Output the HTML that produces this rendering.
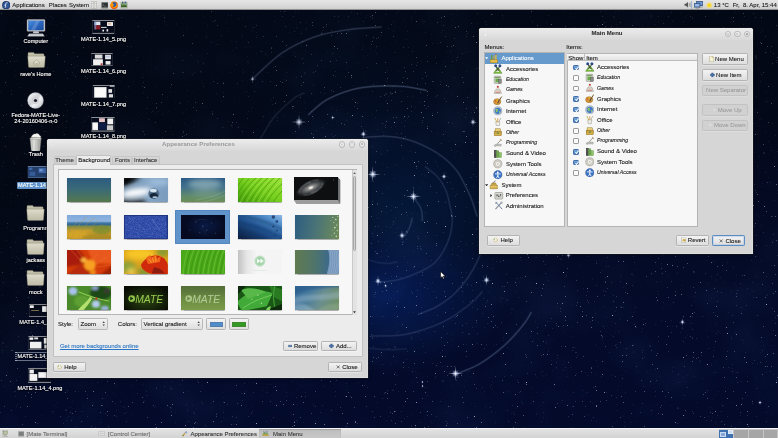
<!DOCTYPE html>
<html>
<head>
<meta charset="utf-8">
<title>MATE Desktop</title>
<style>
*{box-sizing:border-box;margin:0;padding:0}
html,body{width:778px;height:438px;overflow:hidden;background:#060b1c}
body{font-family:"Liberation Sans",sans-serif;font-size:6px;color:#1a1a1a;position:relative;line-height:1;-webkit-text-stroke:.1px}
#wall{position:absolute;left:0;top:0;width:778px;height:438px;
 background:
  radial-gradient(ellipse 120px 75px at 388px 296px, rgba(6,28,86,.95) 0%, rgba(5,22,70,.6) 55%, rgba(4,16,56,0) 100%),
  radial-gradient(ellipse 180px 150px at 405px 210px, rgba(4,24,56,.95) 0%, rgba(4,18,46,.6) 50%, rgba(3,12,34,0) 100%),
  radial-gradient(ellipse 260px 110px at 340px 60px, rgba(3,14,34,.7) 0%, rgba(3,10,26,0) 100%),
  radial-gradient(ellipse 260px 230px at 0px 170px, rgba(3,8,20,.95) 0%, rgba(3,8,20,.6) 50%, rgba(3,8,20,0) 100%),
  linear-gradient(180deg,#030816 0%,#030818 25%,#040a24 50%,#040b2a 70%,#030a2a 100%);}
#wallsvg{position:absolute;left:0;top:0}
#root{position:absolute;left:0;top:0;width:778px;height:438px;overflow:hidden;will-change:transform}
#top{position:absolute;left:0;top:0;width:778px;height:10px;background:linear-gradient(#e6e6e6,#d6d6d6 75%,#cdcdcd);border-bottom:.6px solid #8f8f8f}
#bot{position:absolute;left:0;top:427.600px;width:778px;height:10.400px;background:linear-gradient(#e2e2e2,#d3d3d3);border-top:.6px solid #f6f6f6}
.t{position:absolute;white-space:nowrap;line-height:1}
.win{position:absolute;background:#d6d6d6;border-radius:2.5px 2.5px 0 0;box-shadow:inset 0 0 0 .5px rgba(255,255,255,.35),0 0 0 .6px rgba(40,40,40,.6),0 1px 3.5px rgba(0,0,0,.45)}
.tb{position:absolute;left:0;top:0;right:0;height:11.5px;border-radius:2.5px 2.5px 0 0;background:linear-gradient(#ececec,#d8d8d8)}
.tt{position:absolute;top:2.6px;left:0;right:0;text-align:center;font-weight:bold;font-size:6px;letter-spacing:.15px}
.wb{position:absolute;top:2.2px;width:6.4px;height:6.4px;border-radius:50%;border:.6px solid #bababa;background:linear-gradient(#f2f2f2,#e2e2e2)}
.btn{position:absolute;border:.6px solid #b4b4b4;border-radius:1.3px;background:linear-gradient(#f3f3f3,#dedede);box-shadow:0 .5px 0 rgba(255,255,255,.7)}
.btn .t{top:50%;transform:translateY(-52%)}
.btn.dis{background:#d1d1d1;border-color:#c2c2c2;color:#9e9e9e;box-shadow:0 .5px 0 rgba(255,255,255,.35)}
.white{position:absolute;background:#f7f7f7;border:.6px solid #b4b4b4}
.row{position:absolute;left:0;right:0;height:10.55px}
.row .t{top:2.4px}
.i{font-style:italic;font-size:5.2px}
.row .i{top:2.9px}
.ic{position:absolute;width:8px;height:8px}
.cb{position:absolute;width:5.8px;height:5.8px;border:.6px solid #9a9a9a;border-radius:1.1px;background:#fcfcfc}
.cb.on{background:linear-gradient(#7aa7d8,#4a7fbd);border-color:#3d6ea8}
.cb.on:after{content:"";position:absolute;left:1.5px;top:.2px;width:1.4px;height:3px;border:solid #fff;border-width:0 .8px .8px 0;transform:rotate(40deg)}
.dl{position:absolute;color:#fff;font-size:5.6px;-webkit-text-stroke:.12px #fff;text-align:center;white-space:nowrap;text-shadow:0 .5px 1px #000,0 0 1px #000;transform:translateX(-50%)}
.th{position:absolute;width:44px;height:24.5px;box-shadow:0 .5px 1px rgba(0,0,0,.3)}
.tab{position:absolute;border:.6px solid #c6c6c6;border-bottom:none;border-radius:1.5px 1.5px 0 0;background:linear-gradient(#d6d6d6,#cdcdcd)}
.tab.on{background:#ececec}
.combo{position:absolute;border:.6px solid #b9b9b9;border-radius:1.3px;background:linear-gradient(#f3f3f3,#dedede)}
</style>
</head>
<body>
<div id="root">
<div id="wall"></div>
<svg id="wallsvg" width="778" height="438" viewBox="0 0 778 438">
<defs><radialGradient id="sg"><stop offset="0" stop-color="#fff" stop-opacity="1"/><stop offset=".25" stop-color="#dfe8ff" stop-opacity=".75"/><stop offset="1" stop-color="#9db8ee" stop-opacity="0"/></radialGradient><filter id="bl" x="-20%" y="-20%" width="140%" height="140%"><feGaussianBlur stdDeviation=".7"/></filter></defs>
<filter id="neb" x="0" y="0" width="100%" height="100%"><feTurbulence type="fractalNoise" baseFrequency=".014 .018" numOctaves="3" seed="11"/><feColorMatrix values="0 0 0 0 .08  0 0 0 0 .20  0 0 0 0 .52  0 0 0 1.5 -.68"/></filter>
<filter id="stf" x="0" y="0" width="100%" height="100%"><feTurbulence type="fractalNoise" baseFrequency=".9" numOctaves="2" seed="5"/><feColorMatrix values="0 0 0 0 .8  0 0 0 0 .86  0 0 0 0 1  0 0 0 10 -7.8"/><feGaussianBlur stdDeviation=".3"/></filter>
<filter id="stf2" x="0" y="0" width="100%" height="100%"><feTurbulence type="fractalNoise" baseFrequency=".8" numOctaves="2" seed="23"/><feColorMatrix values="0 0 0 0 .7  0 0 0 0 .78  0 0 0 0 1  0 0 0 8 -6.1"/><feGaussianBlur stdDeviation=".45"/></filter>
<rect x="0" y="10" width="778" height="418" filter="url(#neb)" opacity=".1"/>
<rect y="10" width="778" height="418" filter="url(#stf)" opacity=".68"/>
<rect y="10" width="778" height="418" filter="url(#stf2)" opacity=".45"/>
<g fill="#b9c8ea"><circle cx="252" cy="73" r="0.5" fill-opacity="0.1"/><circle cx="639" cy="49" r="0.5" fill-opacity="0.1"/><circle cx="395" cy="26" r="0.4" fill-opacity="0.3"/><circle cx="187" cy="240" r="0.3" fill-opacity="0.5"/><circle cx="96" cy="103" r="0.5" fill-opacity="0.4"/><circle cx="48" cy="255" r="0.3" fill-opacity="0.6"/><circle cx="36" cy="369" r="0.3" fill-opacity="0.3"/><circle cx="421" cy="249" r="0.5" fill-opacity="0.5"/><circle cx="141" cy="253" r="0.5" fill-opacity="0.2"/><circle cx="76" cy="308" r="0.5" fill-opacity="0.1"/><circle cx="160" cy="294" r="0.4" fill-opacity="0.5"/><circle cx="362" cy="396" r="0.3" fill-opacity="0.3"/><circle cx="618" cy="302" r="0.3" fill-opacity="0.2"/><circle cx="234" cy="217" r="0.3" fill-opacity="0.5"/><circle cx="224" cy="420" r="0.3" fill-opacity="0.4"/><circle cx="128" cy="153" r="0.4" fill-opacity="0.3"/><circle cx="748" cy="42" r="0.5" fill-opacity="0.4"/><circle cx="681" cy="141" r="0.5" fill-opacity="0.3"/><circle cx="386" cy="343" r="0.3" fill-opacity="0.5"/><circle cx="735" cy="208" r="0.5" fill-opacity="0.2"/><circle cx="569" cy="139" r="0.5" fill-opacity="0.6"/><circle cx="639" cy="129" r="0.4" fill-opacity="0.5"/><circle cx="270" cy="403" r="0.3" fill-opacity="0.2"/><circle cx="91" cy="35" r="0.6" fill-opacity="0.3"/><circle cx="574" cy="176" r="0.6" fill-opacity="0.4"/><circle cx="129" cy="178" r="0.3" fill-opacity="0.5"/><circle cx="637" cy="371" r="0.3" fill-opacity="0.5"/><circle cx="767" cy="295" r="0.4" fill-opacity="0.6"/><circle cx="117" cy="84" r="0.3" fill-opacity="0.4"/><circle cx="9" cy="357" r="0.3" fill-opacity="0.2"/><circle cx="3" cy="185" r="0.3" fill-opacity="0.4"/><circle cx="248" cy="62" r="0.6" fill-opacity="0.4"/><circle cx="480" cy="293" r="0.3" fill-opacity="0.3"/><circle cx="678" cy="408" r="0.5" fill-opacity="0.5"/><circle cx="305" cy="177" r="0.3" fill-opacity="0.4"/><circle cx="312" cy="90" r="0.3" fill-opacity="0.3"/><circle cx="86" cy="261" r="0.3" fill-opacity="0.1"/><circle cx="118" cy="52" r="0.3" fill-opacity="0.4"/><circle cx="55" cy="97" r="0.4" fill-opacity="0.2"/><circle cx="196" cy="155" r="0.3" fill-opacity="0.3"/><circle cx="90" cy="214" r="0.4" fill-opacity="0.4"/><circle cx="243" cy="70" r="0.5" fill-opacity="0.3"/><circle cx="206" cy="356" r="0.3" fill-opacity="0.4"/><circle cx="160" cy="408" r="0.3" fill-opacity="0.2"/><circle cx="423" cy="21" r="0.5" fill-opacity="0.3"/><circle cx="500" cy="48" r="0.6" fill-opacity="0.2"/><circle cx="285" cy="80" r="0.6" fill-opacity="0.2"/><circle cx="421" cy="220" r="0.5" fill-opacity="0.2"/><circle cx="631" cy="422" r="0.6" fill-opacity="0.2"/><circle cx="186" cy="177" r="0.6" fill-opacity="0.2"/><circle cx="403" cy="159" r="0.3" fill-opacity="0.6"/><circle cx="615" cy="207" r="0.3" fill-opacity="0.5"/><circle cx="744" cy="197" r="0.5" fill-opacity="0.6"/><circle cx="743" cy="162" r="0.3" fill-opacity="0.2"/><circle cx="366" cy="151" r="0.4" fill-opacity="0.4"/><circle cx="700" cy="361" r="0.4" fill-opacity="0.6"/><circle cx="268" cy="279" r="0.6" fill-opacity="0.4"/><circle cx="708" cy="337" r="0.6" fill-opacity="0.2"/><circle cx="692" cy="191" r="0.5" fill-opacity="0.3"/><circle cx="623" cy="416" r="0.4" fill-opacity="0.3"/><circle cx="578" cy="45" r="0.3" fill-opacity="0.2"/><circle cx="99" cy="73" r="0.4" fill-opacity="0.5"/><circle cx="114" cy="355" r="0.4" fill-opacity="0.4"/><circle cx="273" cy="239" r="0.3" fill-opacity="0.1"/><circle cx="622" cy="314" r="0.3" fill-opacity="0.4"/><circle cx="726" cy="191" r="0.6" fill-opacity="0.2"/><circle cx="680" cy="22" r="0.3" fill-opacity="0.3"/><circle cx="187" cy="255" r="0.3" fill-opacity="0.4"/><circle cx="649" cy="35" r="0.5" fill-opacity="0.3"/><circle cx="356" cy="254" r="0.5" fill-opacity="0.3"/><circle cx="714" cy="220" r="0.5" fill-opacity="0.2"/><circle cx="397" cy="375" r="0.6" fill-opacity="0.2"/><circle cx="3" cy="344" r="0.3" fill-opacity="0.2"/><circle cx="482" cy="60" r="0.3" fill-opacity="0.3"/><circle cx="403" cy="242" r="0.6" fill-opacity="0.5"/><circle cx="687" cy="34" r="0.3" fill-opacity="0.3"/><circle cx="601" cy="222" r="0.5" fill-opacity="0.1"/><circle cx="696" cy="36" r="0.3" fill-opacity="0.4"/><circle cx="393" cy="224" r="0.5" fill-opacity="0.3"/><circle cx="395" cy="347" r="0.5" fill-opacity="0.6"/><circle cx="544" cy="376" r="0.3" fill-opacity="0.6"/><circle cx="695" cy="95" r="0.4" fill-opacity="0.2"/><circle cx="95" cy="195" r="0.3" fill-opacity="0.4"/><circle cx="333" cy="99" r="0.3" fill-opacity="0.5"/><circle cx="698" cy="75" r="0.5" fill-opacity="0.4"/><circle cx="285" cy="116" r="0.3" fill-opacity="0.6"/><circle cx="171" cy="408" r="0.4" fill-opacity="0.5"/><circle cx="127" cy="289" r="0.3" fill-opacity="0.2"/><circle cx="336" cy="226" r="0.3" fill-opacity="0.3"/><circle cx="277" cy="49" r="0.3" fill-opacity="0.1"/><circle cx="431" cy="194" r="0.3" fill-opacity="0.3"/><circle cx="403" cy="133" r="0.3" fill-opacity="0.2"/><circle cx="715" cy="106" r="0.3" fill-opacity="0.2"/><circle cx="212" cy="389" r="0.3" fill-opacity="0.2"/><circle cx="101" cy="187" r="0.5" fill-opacity="0.5"/><circle cx="201" cy="72" r="0.5" fill-opacity="0.4"/><circle cx="545" cy="47" r="0.3" fill-opacity="0.5"/><circle cx="143" cy="384" r="0.3" fill-opacity="0.6"/><circle cx="494" cy="345" r="0.3" fill-opacity="0.4"/><circle cx="173" cy="121" r="0.3" fill-opacity="0.3"/><circle cx="264" cy="241" r="0.3" fill-opacity="0.4"/><circle cx="34" cy="307" r="0.3" fill-opacity="0.6"/><circle cx="204" cy="86" r="0.3" fill-opacity="0.4"/><circle cx="413" cy="96" r="0.4" fill-opacity="0.4"/><circle cx="138" cy="155" r="0.3" fill-opacity="0.6"/><circle cx="29" cy="18" r="0.5" fill-opacity="0.4"/><circle cx="147" cy="208" r="0.4" fill-opacity="0.2"/><circle cx="637" cy="191" r="0.4" fill-opacity="0.4"/><circle cx="691" cy="416" r="0.3" fill-opacity="0.5"/><circle cx="764" cy="153" r="0.6" fill-opacity="0.5"/><circle cx="567" cy="68" r="0.3" fill-opacity="0.6"/><circle cx="651" cy="16" r="0.5" fill-opacity="0.5"/><circle cx="199" cy="78" r="0.3" fill-opacity="0.4"/><circle cx="296" cy="221" r="0.3" fill-opacity="0.4"/><circle cx="539" cy="29" r="0.3" fill-opacity="0.2"/><circle cx="347" cy="120" r="0.3" fill-opacity="0.6"/><circle cx="426" cy="112" r="0.3" fill-opacity="0.2"/><circle cx="142" cy="150" r="0.3" fill-opacity="0.3"/><circle cx="391" cy="94" r="0.5" fill-opacity="0.5"/><circle cx="71" cy="352" r="0.3" fill-opacity="0.3"/><circle cx="32" cy="19" r="0.3" fill-opacity="0.4"/><circle cx="66" cy="410" r="0.6" fill-opacity="0.5"/><circle cx="512" cy="309" r="0.5" fill-opacity="0.3"/><circle cx="254" cy="422" r="0.3" fill-opacity="0.3"/><circle cx="481" cy="71" r="0.6" fill-opacity="0.5"/><circle cx="694" cy="272" r="0.5" fill-opacity="0.5"/><circle cx="393" cy="390" r="0.6" fill-opacity="0.4"/><circle cx="650" cy="346" r="0.6" fill-opacity="0.4"/><circle cx="621" cy="307" r="0.5" fill-opacity="0.4"/><circle cx="66" cy="27" r="0.5" fill-opacity="0.3"/><circle cx="82" cy="359" r="0.5" fill-opacity="0.1"/><circle cx="15" cy="232" r="0.3" fill-opacity="0.4"/><circle cx="3" cy="343" r="0.5" fill-opacity="0.6"/><circle cx="699" cy="48" r="0.5" fill-opacity="0.2"/><circle cx="573" cy="115" r="0.3" fill-opacity="0.5"/><circle cx="183" cy="326" r="0.3" fill-opacity="0.5"/><circle cx="759" cy="216" r="0.4" fill-opacity="0.2"/><circle cx="708" cy="130" r="0.3" fill-opacity="0.4"/><circle cx="500" cy="42" r="0.3" fill-opacity="0.3"/><circle cx="507" cy="300" r="0.5" fill-opacity="0.4"/><circle cx="10" cy="35" r="0.3" fill-opacity="0.6"/><circle cx="77" cy="101" r="0.4" fill-opacity="0.3"/><circle cx="402" cy="204" r="0.4" fill-opacity="0.5"/><circle cx="773" cy="240" r="0.3" fill-opacity="0.6"/><circle cx="728" cy="17" r="0.4" fill-opacity="0.2"/><circle cx="394" cy="426" r="0.3" fill-opacity="0.3"/><circle cx="713" cy="399" r="0.3" fill-opacity="0.4"/><circle cx="110" cy="229" r="0.3" fill-opacity="0.2"/><circle cx="638" cy="223" r="0.3" fill-opacity="0.5"/><circle cx="180" cy="385" r="0.4" fill-opacity="0.3"/><circle cx="124" cy="407" r="0.5" fill-opacity="0.3"/><circle cx="235" cy="69" r="0.3" fill-opacity="0.3"/><circle cx="94" cy="148" r="0.3" fill-opacity="0.5"/><circle cx="653" cy="60" r="0.3" fill-opacity="0.5"/><circle cx="701" cy="131" r="0.3" fill-opacity="0.2"/><circle cx="304" cy="374" r="0.3" fill-opacity="0.3"/><circle cx="333" cy="125" r="0.3" fill-opacity="0.3"/><circle cx="40" cy="287" r="0.5" fill-opacity="0.6"/><circle cx="194" cy="121" r="0.5" fill-opacity="0.3"/><circle cx="602" cy="338" r="0.4" fill-opacity="0.5"/><circle cx="632" cy="274" r="0.5" fill-opacity="0.4"/><circle cx="560" cy="31" r="0.5" fill-opacity="0.3"/><circle cx="478" cy="68" r="0.6" fill-opacity="0.3"/><circle cx="38" cy="397" r="0.3" fill-opacity="0.2"/><circle cx="323" cy="128" r="0.3" fill-opacity="0.5"/><circle cx="760" cy="119" r="0.5" fill-opacity="0.2"/><circle cx="376" cy="290" r="0.3" fill-opacity="0.2"/><circle cx="126" cy="97" r="0.6" fill-opacity="0.4"/><circle cx="171" cy="389" r="0.6" fill-opacity="0.3"/><circle cx="109" cy="90" r="0.3" fill-opacity="0.2"/><circle cx="432" cy="143" r="0.3" fill-opacity="0.2"/><circle cx="443" cy="381" r="0.5" fill-opacity="0.5"/><circle cx="298" cy="322" r="0.3" fill-opacity="0.3"/><circle cx="263" cy="36" r="0.3" fill-opacity="0.4"/><circle cx="280" cy="297" r="0.5" fill-opacity="0.4"/><circle cx="671" cy="100" r="0.3" fill-opacity="0.6"/><circle cx="299" cy="280" r="0.4" fill-opacity="0.6"/><circle cx="660" cy="375" r="0.3" fill-opacity="0.2"/><circle cx="331" cy="329" r="0.6" fill-opacity="0.3"/><circle cx="457" cy="10" r="0.4" fill-opacity="0.6"/><circle cx="722" cy="231" r="0.4" fill-opacity="0.6"/><circle cx="193" cy="56" r="0.3" fill-opacity="0.2"/><circle cx="756" cy="56" r="0.6" fill-opacity="0.5"/><circle cx="504" cy="330" r="0.4" fill-opacity="0.2"/><circle cx="604" cy="11" r="0.3" fill-opacity="0.2"/><circle cx="716" cy="280" r="0.3" fill-opacity="0.6"/><circle cx="487" cy="231" r="0.4" fill-opacity="0.5"/><circle cx="87" cy="39" r="0.5" fill-opacity="0.6"/><circle cx="149" cy="119" r="0.6" fill-opacity="0.4"/><circle cx="8" cy="136" r="0.4" fill-opacity="0.3"/><circle cx="246" cy="361" r="0.3" fill-opacity="0.3"/><circle cx="183" cy="113" r="0.4" fill-opacity="0.5"/><circle cx="239" cy="19" r="0.4" fill-opacity="0.5"/><circle cx="503" cy="44" r="0.3" fill-opacity="0.4"/><circle cx="720" cy="105" r="0.3" fill-opacity="0.5"/><circle cx="559" cy="161" r="0.4" fill-opacity="0.2"/><circle cx="620" cy="319" r="0.5" fill-opacity="0.2"/><circle cx="386" cy="94" r="0.6" fill-opacity="0.5"/><circle cx="180" cy="103" r="0.6" fill-opacity="0.5"/><circle cx="85" cy="271" r="0.5" fill-opacity="0.2"/><circle cx="174" cy="184" r="0.5" fill-opacity="0.1"/><circle cx="463" cy="395" r="0.3" fill-opacity="0.2"/><circle cx="758" cy="69" r="0.3" fill-opacity="0.5"/><circle cx="143" cy="198" r="0.5" fill-opacity="0.5"/><circle cx="570" cy="427" r="0.3" fill-opacity="0.3"/><circle cx="144" cy="401" r="0.5" fill-opacity="0.3"/><circle cx="243" cy="313" r="0.6" fill-opacity="0.3"/><circle cx="258" cy="81" r="0.3" fill-opacity="0.2"/><circle cx="63" cy="186" r="0.3" fill-opacity="0.4"/><circle cx="590" cy="169" r="0.6" fill-opacity="0.5"/><circle cx="640" cy="191" r="0.3" fill-opacity="0.5"/><circle cx="152" cy="236" r="0.4" fill-opacity="0.2"/><circle cx="283" cy="385" r="0.3" fill-opacity="0.4"/><circle cx="193" cy="271" r="0.4" fill-opacity="0.1"/><circle cx="27" cy="36" r="0.3" fill-opacity="0.2"/><circle cx="581" cy="386" r="0.3" fill-opacity="0.3"/><circle cx="261" cy="409" r="0.3" fill-opacity="0.2"/><circle cx="558" cy="142" r="0.3" fill-opacity="0.3"/><circle cx="561" cy="259" r="0.6" fill-opacity="0.4"/><circle cx="734" cy="20" r="0.3" fill-opacity="0.2"/><circle cx="557" cy="205" r="0.6" fill-opacity="0.3"/><circle cx="195" cy="190" r="0.4" fill-opacity="0.2"/><circle cx="386" cy="14" r="0.5" fill-opacity="0.3"/><circle cx="538" cy="73" r="0.3" fill-opacity="0.3"/><circle cx="249" cy="161" r="0.6" fill-opacity="0.4"/><circle cx="398" cy="174" r="0.3" fill-opacity="0.2"/><circle cx="50" cy="24" r="0.5" fill-opacity="0.4"/><circle cx="125" cy="188" r="0.3" fill-opacity="0.6"/><circle cx="206" cy="45" r="0.3" fill-opacity="0.3"/><circle cx="769" cy="416" r="0.3" fill-opacity="0.2"/><circle cx="324" cy="269" r="0.5" fill-opacity="0.2"/><circle cx="419" cy="333" r="0.6" fill-opacity="0.2"/><circle cx="654" cy="133" r="0.5" fill-opacity="0.2"/><circle cx="198" cy="119" r="0.4" fill-opacity="0.2"/><circle cx="191" cy="74" r="0.5" fill-opacity="0.2"/><circle cx="50" cy="115" r="0.3" fill-opacity="0.4"/><circle cx="180" cy="348" r="0.5" fill-opacity="0.3"/><circle cx="29" cy="12" r="0.6" fill-opacity="0.2"/><circle cx="349" cy="166" r="0.3" fill-opacity="0.2"/><circle cx="39" cy="261" r="0.6" fill-opacity="0.4"/><circle cx="724" cy="166" r="0.6" fill-opacity="0.2"/><circle cx="469" cy="334" r="0.5" fill-opacity="0.6"/><circle cx="82" cy="259" r="0.5" fill-opacity="0.3"/><circle cx="29" cy="152" r="0.3" fill-opacity="0.2"/><circle cx="198" cy="261" r="0.5" fill-opacity="0.6"/><circle cx="634" cy="352" r="0.4" fill-opacity="0.4"/><circle cx="144" cy="140" r="0.3" fill-opacity="0.1"/><circle cx="386" cy="212" r="0.4" fill-opacity="0.2"/><circle cx="308" cy="240" r="0.5" fill-opacity="0.4"/><circle cx="508" cy="176" r="0.3" fill-opacity="0.3"/><circle cx="220" cy="139" r="0.3" fill-opacity="0.3"/><circle cx="441" cy="159" r="0.4" fill-opacity="0.1"/><circle cx="596" cy="345" r="0.5" fill-opacity="0.2"/><circle cx="566" cy="95" r="0.3" fill-opacity="0.3"/><circle cx="122" cy="57" r="0.3" fill-opacity="0.3"/><circle cx="687" cy="203" r="0.3" fill-opacity="0.2"/><circle cx="40" cy="70" r="0.6" fill-opacity="0.6"/><circle cx="69" cy="270" r="0.3" fill-opacity="0.5"/><circle cx="134" cy="155" r="0.3" fill-opacity="0.4"/><circle cx="720" cy="55" r="0.4" fill-opacity="0.5"/></g>
<path d="M252.5,79.0C257.3,74.7 271.2,60.4 281.4,53.4C291.6,46.4 302.8,41.2 313.5,37.3C324.2,33.4 334.4,31.7 345.7,30.0C356.9,28.3 375.1,27.5 381.0,27.0" fill="none" stroke="#8fa9d8" stroke-opacity="0.17" stroke-width="2.200" stroke-linecap="round" filter="url(#bl)"/>
<path d="M252.5,79.0C257.3,74.7 271.2,60.4 281.4,53.4C291.6,46.4 302.8,41.2 313.5,37.3C324.2,33.4 334.4,31.7 345.7,30.0C356.9,28.3 375.1,27.5 381.0,27.0" fill="none" stroke="#b4c6e8" stroke-opacity="0.23" stroke-width="0.8" stroke-linecap="round"/>
<path d="M308.7,114.4C311.6,112.0 319.2,104.1 326.4,100.0C333.6,95.9 343.4,92.0 352.0,89.7C360.6,87.4 369.2,86.7 377.8,86.2C386.4,85.7 395.5,85.8 403.5,86.5C411.5,87.2 422.2,89.7 426.0,90.3" fill="none" stroke="#8fa9d8" stroke-opacity="0.17" stroke-width="2.200" stroke-linecap="round" filter="url(#bl)"/>
<path d="M308.7,114.4C311.6,112.0 319.2,104.1 326.4,100.0C333.6,95.9 343.4,92.0 352.0,89.7C360.6,87.4 369.2,86.7 377.8,86.2C386.4,85.7 395.5,85.8 403.5,86.5C411.5,87.2 422.2,89.7 426.0,90.3" fill="none" stroke="#b4c6e8" stroke-opacity="0.23" stroke-width="0.8" stroke-linecap="round"/>
<path d="M260.5,138.5C262.9,134.8 269.4,122.7 275.0,116.0C280.6,109.3 289.2,102.2 294.0,98.4C298.8,94.6 302.3,93.9 304.0,93.0" fill="none" stroke="#8fa9d8" stroke-opacity="0.07" stroke-width="2.200" stroke-linecap="round" filter="url(#bl)"/>
<path d="M260.5,138.5C262.9,134.8 269.4,122.7 275.0,116.0C280.6,109.3 289.2,102.2 294.0,98.4C298.8,94.6 302.3,93.9 304.0,93.0" fill="none" stroke="#b4c6e8" stroke-opacity="0.10" stroke-width="0.8" stroke-linecap="round"/>
<path d="M363.0,137.5C366.9,137.3 379.2,136.0 386.5,136.3C393.8,136.6 400.1,137.5 407.0,139.4C413.9,141.3 421.4,144.5 427.6,147.6C433.8,150.7 439.2,154.1 444.0,157.9C448.8,161.7 453.3,166.4 456.4,170.2C459.5,174.0 460.2,175.9 462.6,180.5C465.0,185.1 468.6,192.1 471.0,198.0C473.4,203.9 476.0,213.0 477.0,216.0" fill="none" stroke="#8fa9d8" stroke-opacity="0.10" stroke-width="2.200" stroke-linecap="round" filter="url(#bl)"/>
<path d="M363.0,137.5C366.9,137.3 379.2,136.0 386.5,136.3C393.8,136.6 400.1,137.5 407.0,139.4C413.9,141.3 421.4,144.5 427.6,147.6C433.8,150.7 439.2,154.1 444.0,157.9C448.8,161.7 453.3,166.4 456.4,170.2C459.5,174.0 460.2,175.9 462.6,180.5C465.0,185.1 468.6,192.1 471.0,198.0C473.4,203.9 476.0,213.0 477.0,216.0" fill="none" stroke="#b4c6e8" stroke-opacity="0.14" stroke-width="0.8" stroke-linecap="round"/>
<path d="M480.0,255.5C478.8,257.9 475.4,265.4 472.8,269.9C470.2,274.3 468.1,277.8 464.6,282.2C461.1,286.6 456.8,291.9 452.0,296.0C447.2,300.1 441.6,303.9 436.0,307.0C430.4,310.1 421.3,313.1 418.4,314.3" fill="none" stroke="#8fa9d8" stroke-opacity="0.09" stroke-width="2.200" stroke-linecap="round" filter="url(#bl)"/>
<path d="M480.0,255.5C478.8,257.9 475.4,265.4 472.8,269.9C470.2,274.3 468.1,277.8 464.6,282.2C461.1,286.6 456.8,291.9 452.0,296.0C447.2,300.1 441.6,303.9 436.0,307.0C430.4,310.1 421.3,313.1 418.4,314.3" fill="none" stroke="#b4c6e8" stroke-opacity="0.12" stroke-width="0.8" stroke-linecap="round"/>
<path d="M425.6,167.0C427.7,168.7 434.6,173.5 438.0,177.4C441.4,181.3 444.0,185.8 446.0,190.7C448.0,195.6 449.1,202.0 450.2,207.0C451.2,212.0 452.6,214.8 452.3,220.5C452.0,226.2 450.9,234.2 448.2,241.0C445.5,247.8 440.7,256.4 435.9,261.6C431.1,266.8 425.2,269.1 419.4,272.0C413.6,274.9 406.5,277.4 401.0,279.0C395.5,280.6 390.3,281.0 386.5,281.5C382.7,282.0 379.7,282.1 378.3,282.2" fill="none" stroke="#8fa9d8" stroke-opacity="0.08" stroke-width="2.200" stroke-linecap="round" filter="url(#bl)"/>
<path d="M425.6,167.0C427.7,168.7 434.6,173.5 438.0,177.4C441.4,181.3 444.0,185.8 446.0,190.7C448.0,195.6 449.1,202.0 450.2,207.0C451.2,212.0 452.6,214.8 452.3,220.5C452.0,226.2 450.9,234.2 448.2,241.0C445.5,247.8 440.7,256.4 435.9,261.6C431.1,266.8 425.2,269.1 419.4,272.0C413.6,274.9 406.5,277.4 401.0,279.0C395.5,280.6 390.3,281.0 386.5,281.5C382.7,282.0 379.7,282.1 378.3,282.2" fill="none" stroke="#b4c6e8" stroke-opacity="0.11" stroke-width="0.8" stroke-linecap="round"/>
<path d="M413.3,197.3C414.1,198.4 417.0,201.8 418.4,204.0C419.8,206.2 420.8,207.6 421.5,210.3C422.2,213.1 422.3,218.8 422.5,220.5" fill="none" stroke="#8fa9d8" stroke-opacity="0.10" stroke-width="2.200" stroke-linecap="round" filter="url(#bl)"/>
<path d="M413.3,197.3C414.1,198.4 417.0,201.8 418.4,204.0C419.8,206.2 420.8,207.6 421.5,210.3C422.2,213.1 422.3,218.8 422.5,220.5" fill="none" stroke="#b4c6e8" stroke-opacity="0.13" stroke-width="0.7" stroke-linecap="round"/>
<path d="M412.2,218.5C411.7,220.2 410.4,225.9 409.0,228.8C407.6,231.7 405.1,234.7 404.0,236.0C402.9,237.3 402.8,236.5 402.6,236.6" fill="none" stroke="#8fa9d8" stroke-opacity="0.10" stroke-width="2.200" stroke-linecap="round" filter="url(#bl)"/>
<path d="M412.2,218.5C411.7,220.2 410.4,225.9 409.0,228.8C407.6,231.7 405.1,234.7 404.0,236.0C402.9,237.3 402.8,236.5 402.6,236.6" fill="none" stroke="#b4c6e8" stroke-opacity="0.13" stroke-width="0.7" stroke-linecap="round"/>
<path d="M368.0,259.6C369.7,260.1 374.9,262.1 378.3,262.7C381.7,263.3 385.5,263.4 388.6,263.3C391.7,263.2 395.6,262.2 397.0,262.0" fill="none" stroke="#8fa9d8" stroke-opacity="0.06" stroke-width="2.200" stroke-linecap="round" filter="url(#bl)"/>
<path d="M368.0,259.6C369.7,260.1 374.9,262.1 378.3,262.7C381.7,263.3 385.5,263.4 388.6,263.3C391.7,263.2 395.6,262.2 397.0,262.0" fill="none" stroke="#b4c6e8" stroke-opacity="0.08" stroke-width="0.7" stroke-linecap="round"/>
<path d="M372.0,336.0C377.7,335.7 394.2,336.6 406.0,334.3C417.8,332.0 432.2,327.1 443.0,322.0C453.8,316.9 464.3,308.5 470.8,303.5C477.3,298.5 480.1,293.9 482.0,292.0" fill="none" stroke="#8fa9d8" stroke-opacity="0.08" stroke-width="2.200" stroke-linecap="round" filter="url(#bl)"/>
<path d="M372.0,336.0C377.7,335.7 394.2,336.6 406.0,334.3C417.8,332.0 432.2,327.1 443.0,322.0C453.8,316.9 464.3,308.5 470.8,303.5C477.3,298.5 480.1,293.9 482.0,292.0" fill="none" stroke="#b4c6e8" stroke-opacity="0.11" stroke-width="0.8" stroke-linecap="round"/>
<path d="M369.0,348.2C372.1,348.4 381.4,349.6 387.6,349.7C393.8,349.8 402.9,348.9 406.0,348.8" fill="none" stroke="#8fa9d8" stroke-opacity="0.06" stroke-width="2.200" stroke-linecap="round" filter="url(#bl)"/>
<path d="M369.0,348.2C372.1,348.4 381.4,349.6 387.6,349.7C393.8,349.8 402.9,348.9 406.0,348.8" fill="none" stroke="#b4c6e8" stroke-opacity="0.08" stroke-width="0.7" stroke-linecap="round"/>
<path d="M455.4,374.4C459.5,372.6 471.8,368.5 480.0,363.6C488.2,358.7 497.5,351.5 504.7,345.1C511.9,338.7 518.8,330.4 523.2,325.0C527.6,319.6 529.7,314.8 531.0,312.7" fill="none" stroke="#8fa9d8" stroke-opacity="0.14" stroke-width="2.200" stroke-linecap="round" filter="url(#bl)"/>
<path d="M455.4,374.4C459.5,372.6 471.8,368.5 480.0,363.6C488.2,358.7 497.5,351.5 504.7,345.1C511.9,338.7 518.8,330.4 523.2,325.0C527.6,319.6 529.7,314.8 531.0,312.7" fill="none" stroke="#b4c6e8" stroke-opacity="0.19" stroke-width="0.8" stroke-linecap="round"/>
<g transform="translate(252.5,79.0)"><circle r="2.1" fill="url(#sg)"/><path d="M-4.2,0L0,-0.28L4.2,0L0,0.28zM0,-4.2L0.28,0L0,4.2L-0.28,0z" fill="#eef3ff" fill-opacity=".8"/><path d="M-1.8,-1.8L1.8,1.8M-1.8,1.8L1.8,-1.8" stroke="#dfe8ff" stroke-opacity=".35" stroke-width=".35"/></g>
<g transform="translate(299.0,122.0)"><circle r="3.8" fill="url(#sg)"/><path d="M-7.6,0L0,-0.44L7.6,0L0,0.44zM0,-7.6L0.44,0L0,7.6L-0.44,0z" fill="#eef3ff" fill-opacity=".8"/><path d="M-3.2,-3.2L3.2,3.2M-3.2,3.2L3.2,-3.2" stroke="#dfe8ff" stroke-opacity=".35" stroke-width=".35"/></g>
<g transform="translate(332.8,117.6)"><circle r="1.2" fill="url(#sg)"/><path d="M-2.5,0L0,-0.28L2.5,0L0,0.28zM0,-2.5L0.28,0L0,2.5L-0.28,0z" fill="#eef3ff" fill-opacity=".8"/><path d="M-1.0,-1.0L1.0,1.0M-1.0,1.0L1.0,-1.0" stroke="#dfe8ff" stroke-opacity=".35" stroke-width=".35"/></g>
<g transform="translate(363.4,134.0)"><circle r="2.5" fill="url(#sg)"/><path d="M-4.9,0L0,-0.29L4.9,0L0,0.29zM0,-4.9L0.29,0L0,4.9L-0.29,0z" fill="#eef3ff" fill-opacity=".8"/><path d="M-2.1,-2.1L2.1,2.1M-2.1,2.1L2.1,-2.1" stroke="#dfe8ff" stroke-opacity=".35" stroke-width=".35"/></g>
<g transform="translate(473.0,122.0)"><circle r="2.5" fill="url(#sg)"/><path d="M-4.9,0L0,-0.29L4.9,0L0,0.29zM0,-4.9L0.29,0L0,4.9L-0.29,0z" fill="#eef3ff" fill-opacity=".8"/><path d="M-2.1,-2.1L2.1,2.1M-2.1,2.1L2.1,-2.1" stroke="#dfe8ff" stroke-opacity=".35" stroke-width=".35"/></g>
<g transform="translate(372.8,174.2)"><circle r="4.0" fill="url(#sg)"/><path d="M-8.0,0L0,-0.46L8.0,0L0,0.46zM0,-8.0L0.46,0L0,8.0L-0.46,0z" fill="#eef3ff" fill-opacity=".8"/><path d="M-3.4,-3.4L3.4,3.4M-3.4,3.4L3.4,-3.4" stroke="#dfe8ff" stroke-opacity=".35" stroke-width=".35"/></g>
<g transform="translate(413.5,196.5)"><circle r="3.8" fill="url(#sg)"/><path d="M-7.6,0L0,-0.44L7.6,0L0,0.44zM0,-7.6L0.44,0L0,7.6L-0.44,0z" fill="#eef3ff" fill-opacity=".8"/><path d="M-3.2,-3.2L3.2,3.2M-3.2,3.2L3.2,-3.2" stroke="#dfe8ff" stroke-opacity=".35" stroke-width=".35"/></g>
<g transform="translate(402.0,235.5)"><circle r="2.7" fill="url(#sg)"/><path d="M-5.3,0L0,-0.31L5.3,0L0,0.31zM0,-5.3L0.31,0L0,5.3L-0.31,0z" fill="#eef3ff" fill-opacity=".8"/><path d="M-2.2,-2.2L2.2,2.2M-2.2,2.2L2.2,-2.2" stroke="#dfe8ff" stroke-opacity=".35" stroke-width=".35"/></g>
<g transform="translate(444.0,176.5)"><circle r="2.1" fill="url(#sg)"/><path d="M-4.2,0L0,-0.28L4.2,0L0,0.28zM0,-4.2L0.28,0L0,4.2L-0.28,0z" fill="#eef3ff" fill-opacity=".8"/><path d="M-1.8,-1.8L1.8,1.8M-1.8,1.8L1.8,-1.8" stroke="#dfe8ff" stroke-opacity=".35" stroke-width=".35"/></g>
<g transform="translate(378.0,281.0)"><circle r="2.8" fill="url(#sg)"/><path d="M-5.7,0L0,-0.33L5.7,0L0,0.33zM0,-5.7L0.33,0L0,5.7L-0.33,0z" fill="#eef3ff" fill-opacity=".8"/><path d="M-2.4,-2.4L2.4,2.4M-2.4,2.4L2.4,-2.4" stroke="#dfe8ff" stroke-opacity=".35" stroke-width=".35"/></g>
<g transform="translate(385.5,285.7)"><circle r="1.2" fill="url(#sg)"/><path d="M-2.5,0L0,-0.28L2.5,0L0,0.28zM0,-2.5L0.28,0L0,2.5L-0.28,0z" fill="#eef3ff" fill-opacity=".8"/><path d="M-1.0,-1.0L1.0,1.0M-1.0,1.0L1.0,-1.0" stroke="#dfe8ff" stroke-opacity=".35" stroke-width=".35"/></g>
<g transform="translate(486.5,280.0)"><circle r="3.0" fill="url(#sg)"/><path d="M-6.1,0L0,-0.35L6.1,0L0,0.35zM0,-6.1L0.35,0L0,6.1L-0.35,0z" fill="#eef3ff" fill-opacity=".8"/><path d="M-2.6,-2.6L2.6,2.6M-2.6,2.6L2.6,-2.6" stroke="#dfe8ff" stroke-opacity=".35" stroke-width=".35"/></g>
<g transform="translate(455.5,373.5)"><circle r="3.8" fill="url(#sg)"/><path d="M-7.6,0L0,-0.44L7.6,0L0,0.44zM0,-7.6L0.44,0L0,7.6L-0.44,0z" fill="#eef3ff" fill-opacity=".8"/><path d="M-3.2,-3.2L3.2,3.2M-3.2,3.2L3.2,-3.2" stroke="#dfe8ff" stroke-opacity=".35" stroke-width=".35"/></g>
<g transform="translate(422.4,382.0)"><circle r="0.9" fill="url(#sg)"/><path d="M-1.7,0L0,-0.28L1.7,0L0,0.28zM0,-1.7L0.28,0L0,1.7L-0.28,0z" fill="#eef3ff" fill-opacity=".8"/><path d="M-0.7,-0.7L0.7,0.7M-0.7,0.7L0.7,-0.7" stroke="#dfe8ff" stroke-opacity=".35" stroke-width=".35"/></g>
<g transform="translate(422.6,386.0)"><circle r="0.9" fill="url(#sg)"/><path d="M-1.7,0L0,-0.28L1.7,0L0,0.28zM0,-1.7L0.28,0L0,1.7L-0.28,0z" fill="#eef3ff" fill-opacity=".8"/><path d="M-0.7,-0.7L0.7,0.7M-0.7,0.7L0.7,-0.7" stroke="#dfe8ff" stroke-opacity=".35" stroke-width=".35"/></g>
<g transform="translate(568.5,255.0)"><circle r="2.1" fill="url(#sg)"/><path d="M-4.2,0L0,-0.28L4.2,0L0,0.28zM0,-4.2L0.28,0L0,4.2L-0.28,0z" fill="#eef3ff" fill-opacity=".8"/><path d="M-1.8,-1.8L1.8,1.8M-1.8,1.8L1.8,-1.8" stroke="#dfe8ff" stroke-opacity=".35" stroke-width=".35"/></g>
<g transform="translate(682.4,322.0)"><circle r="2.1" fill="url(#sg)"/><path d="M-4.2,0L0,-0.28L4.2,0L0,0.28zM0,-4.2L0.28,0L0,4.2L-0.28,0z" fill="#eef3ff" fill-opacity=".8"/><path d="M-1.8,-1.8L1.8,1.8M-1.8,1.8L1.8,-1.8" stroke="#dfe8ff" stroke-opacity=".35" stroke-width=".35"/></g>
<g transform="translate(760.0,402.6)"><circle r="1.3" fill="url(#sg)"/><path d="M-2.7,0L0,-0.28L2.7,0L0,0.28zM0,-2.7L0.28,0L0,2.7L-0.28,0z" fill="#eef3ff" fill-opacity=".8"/><path d="M-1.1,-1.1L1.1,1.1M-1.1,1.1L1.1,-1.1" stroke="#dfe8ff" stroke-opacity=".35" stroke-width=".35"/></g>
</svg>
<div style="position:absolute;left:0;top:10px;width:778px;height:418px;background:radial-gradient(ellipse 330px 300px at 0px 120px,rgba(3,8,20,.55) 0%,rgba(3,8,20,.4) 50%,rgba(3,8,20,0) 100%),linear-gradient(180deg,rgba(3,8,20,.35),rgba(3,8,20,0) 30%)"></div>
<div id="top">
 <svg class="t" style="left:2px;top:.6px" width="8.400" height="8.400" viewBox="0 0 16 16"><circle cx="8" cy="8" r="7.800" fill="#20386a"/><circle cx="8" cy="8" r="6.200" fill="#2f5596"/><path d="M10.6 3.2c-1.9-.5-3.4.7-3.4 2.5v1.6H5.6v1.5h1.6v2c0 1-.8 1.7-1.8 1.5" fill="none" stroke="#fff" stroke-width="1.5"/></svg>
 <span class="t" style="left:12.3px;top:1.9px">Applications</span>
 <span class="t" style="left:48.8px;top:1.9px">Places</span>
 <span class="t" style="left:68.9px;top:1.9px">System</span>
 <!-- launchers -->
 <svg class="t" style="left:91.3px;top:1.2px" width="6" height="7.6" viewBox="0 0 12 15"><rect x=".5" y=".5" width="11" height="14" rx="1" fill="#e9e9e6" stroke="#9a9a96"/><path d="M1 5h10M1 10h10" stroke="#aaa"/><path d="M4 3h4M4 7.6h4M4 12.4h4" stroke="#a4a4a0" stroke-width="1.1"/></svg>
 <svg class="t" style="left:100.5px;top:1.8px" width="7.8" height="6.800" viewBox="0 0 15 14"><rect x=".5" y=".5" width="14" height="13" rx="1" fill="#4a4f52" stroke="#8e908b"/><rect x="1" y="11.500" width="13" height="2" fill="#b4b6b1"/><rect x="2" y="2.5" width="11" height="8" fill="#2a3034"/><path d="M3 5l2 1.4-2 1.4M6.5 8.5h3" stroke="#d3d7cf" stroke-width=".9" fill="none"/></svg>
 <svg class="t" style="left:110.2px;top:1px" width="8.4" height="8.4" viewBox="0 0 16 16"><circle cx="8" cy="8" r="7" fill="#e66000"/><circle cx="8.3" cy="7" r="4.6" fill="#2d5fa8"/><path d="M1.2 7c.3-3 2.6-5.6 6-6-1.7 1-2.6 2.2-2.8 3.800 1.400 0 2.800 1.400 2.600 3-.1 1.500-1.300 2.500-2.800 2.400 1.800 1.700 5.400 1.400 7-.8 1.200-1.700 1.500-3.600.9-5.500 1.600 1.500 2.200 4 1.500 6.200-.9 3-3.500 4.900-6.600 4.900-4 0-7.200-3.500-6.800-8z" fill="#ff9500"/><path d="M1.500 9c.5 3.300 3.300 6 6.500 6 3.400 0 6-2.300 6.800-5.500-1.200 2.600-3.500 4-6.300 3.800-3-.2-5.300-1.800-7-4.300z" fill="#e31b1b" fill-opacity=".6"/></svg>
 <svg class="t" style="left:120.2px;top:1.2px" width="7.8" height="7.6" viewBox="0 0 16 15"><rect x=".5" y="2.500" width="15" height="12" rx="1" fill="#eef0ea" stroke="#8a8f84"/><rect x="2" y="4.500" width="12" height="8" fill="#5f8a4a"/><path d="M2 10l3.500-3.500 3 3 2-2 3.500 3.500v1.500H2z" fill="#3a5f2a"/><circle cx="11" cy="3" r="2.200" fill="#4a6a9a"/><circle cx="5.500" cy="2.800" r="1.900" fill="#4f5f6a"/><path d="M4 8h3M9 6.500h3" stroke="#e9efe4" stroke-width="1"/></svg>
 <!-- tray -->
 <svg class="t" style="left:683.6px;top:1.3px" width="7" height="7.4" viewBox="0 0 14 15"><path d="M1 5.500h2.800L8 2v11L3.800 9.500H1z" fill="#555"/><path d="M10 4.500c1.300 1.700 1.300 4.300 0 6" stroke="#666" stroke-width="1.200" fill="none"/><path d="M12 2.800c2 2.700 2 6.700 0 9.400" stroke="#888" stroke-width="1.100" fill="none"/></svg>
 <div class="t" style="left:690.8px;top:1.2px;width:.7px;height:7.6px;background:#9db4d2"></div>
 <svg class="t" style="left:693.6px;top:1.1px" width="9.600" height="7.800" viewBox="0 0 19 15"><rect x="5" y=".5" width="13" height="8.500" fill="#3b5f9a" stroke="#26406e"/><rect x="6.500" y="2" width="10" height="5.500" fill="#6f9bd6"/><rect x=".8" y="4.500" width="11" height="7.500" fill="#4c72ad" stroke="#2b4878"/><rect x="2.200" y="6" width="8.200" height="4.500" fill="#9cc0ea"/><rect x="3" y="13" width="7" height="1.500" fill="#777"/><rect x="9" y="11" width="8" height="1.300" fill="#777"/></svg>
 <svg class="t" style="left:706px;top:1.6px" width="6.600" height="6.600" viewBox="0 0 12 12"><circle cx="6" cy="6" r="5.600" fill="#fbe36a" fill-opacity=".55"/><circle cx="6" cy="6" r="3.600" fill="#f7d428"/></svg>
 <span class="t" style="left:713.8px;top:1.9px">13 °C</span>
 <span class="t" style="left:732.7px;top:1.9px">Fr,&nbsp; 8. Apr, 15:44</span>
</div>
<div id="bot">
 <svg class="t" style="left:1.8px;top:1.6px" width="6.600" height="6.600" viewBox="0 0 13 13"><rect x=".5" y=".5" width="12" height="12" rx="1.500" fill="#e8e8e2" stroke="#8d8d86"/><rect x="2.500" y="3" width="8" height="6" fill="#b9c2a4" stroke="#6f7a58" stroke-width=".8"/><path d="M4 11h5" stroke="#777"/></svg>
 <!-- active task bg -->
 <div class="t" style="left:259px;top:0;width:82px;height:10px;background:linear-gradient(#bdbdbd,#c9c9c9);box-shadow:inset 0 .6px 1px rgba(0,0,0,.25)"></div>
 <svg class="t" style="left:17.600px;top:2.400px;opacity:.55" width="6.400" height="5.600" viewBox="0 0 13 11"><rect x=".5" y=".5" width="12" height="10" fill="#555753" stroke="#888"/><rect x="2" y="2" width="9" height="6.500" fill="#2e3436"/></svg>
 <span class="t" style="left:26.500px;top:2.300px;color:#6a6a6a">[Mate Terminal]</span>
 <svg class="t" style="left:98px;top:2.300px" width="7" height="5.400" viewBox="0 0 14 11"><rect x=".5" y="1.500" width="13" height="8" rx="1" fill="#e4e4e4" stroke="#aaa"/><path d="M3 5.500h8" stroke="#999"/></svg>
 <span class="t" style="left:107.800px;top:2.300px;color:#6a6a6a">[Control Center]</span>
 <svg class="t" style="left:180.500px;top:1.600px" width="7.200" height="7" viewBox="0 0 14 14"><path d="M2 12l5-7 2 2-5 6z" fill="#c9a24a"/><path d="M7 5l3-3.500 3 3.500-3 2z" fill="#8fa6c8"/><circle cx="4" cy="11" r="1.600" fill="#7a8e3a"/></svg>
 <span class="t" style="left:190.500px;top:2.300px;color:#333">Appearance Preferences</span>
 <svg class="t" style="left:262px;top:1.800px" width="7" height="6.400" viewBox="0 0 14 13"><path d="M1 8l4-5 3 4 2-2 3 3v3H1z" fill="#7fa353"/><rect x="1" y="9" width="12" height="3" fill="#c9a24a"/><path d="M3 2l2 5M9 1l-1 5M12 2l-2 4" stroke="#5a76a8" stroke-width="1.100"/></svg>
 <span class="t" style="left:273px;top:2.300px;color:#3a3a3a">Main Menu</span>
 <!-- workspace switcher -->
 <div class="t" style="left:718.800px;top:.9px;width:58.800px;height:9.500px;background:#c6c6c6"></div>
 <div class="t" style="left:719.300px;top:1.300px;width:13.900px;height:9.100px;background:#3f70b0"></div>
 <div class="t" style="left:720.100px;top:3.400px;width:6.400px;height:5.200px;background:#86a9d8;border:.6px solid #c9daf0"></div>
 <div class="t" style="left:727.900px;top:1.800px;width:5px;height:3.800px;background:#c4d8f0;border:.5px solid #e2ecf8"></div>
 <div class="t" style="left:734px;top:1.300px;width:13.900px;height:9.100px;background:#a6a6a6"></div>
 <div class="t" style="left:749px;top:1.300px;width:13.700px;height:9.100px;background:#a6a6a6"></div>
 <div class="t" style="left:763.700px;top:1.300px;width:13.600px;height:9.100px;background:#a6a6a6"></div>
</div>
<!-- desktop icons -->
<svg class="t" style="left:26.0px;top:19.0px" width="20.0" height="17.8" viewBox="0 0 40 36"><defs><linearGradient id="scr" x1="0" y1="0" x2="1" y2="1"><stop offset="0" stop-color="#4a8fe0"/><stop offset=".5" stop-color="#2a66c0"/><stop offset="1" stop-color="#1a4a9a"/></linearGradient></defs><rect x="2" y="1" width="36" height="24" rx="1.500" fill="#e6e8ea" stroke="#8a8d92" stroke-width=".9"/><rect x="4.500" y="3.500" width="31" height="19" fill="url(#scr)" stroke="#2a4f86" stroke-width=".6"/><path d="M20 3.500h8L18 22.500h-8z" fill="#fff" fill-opacity=".18"/><path d="M15 25h10l1.500 4h-13z" fill="#c4c7cc"/><path d="M6 30h28l3 5H3z" fill="#dcdee2" stroke="#8a8d92" stroke-width=".8"/><path d="M8 32h24" stroke="#9a9da2" stroke-width="1.200" stroke-dasharray="2 1"/></svg>
<div class="dl" style="left:35.8px;top:39.1px">Computer</div>
<svg class="t" style="left:26.8px;top:50.8px" width="19.0" height="17.5" viewBox="0 0 40 37"><defs><linearGradient id="fg1" x1="0" y1="0" x2="0" y2="1"><stop offset="0" stop-color="#dedccb"/><stop offset="1" stop-color="#bdbba6"/></linearGradient></defs><path d="M2 5c0-1 .8-2 2-2h10l2 3h18c1 0 2 1 2 2v3H2z" fill="#c2c0aa" stroke="#86836c" stroke-width=".8"/><path d="M1.500 11h37l-1.500 22c0 1-1 2-2 2H5c-1 0-2-1-2-2z" fill="url(#fg1)" stroke="#807d68" stroke-width=".8"/><path d="M2.500 12h35" stroke="#ecead9" stroke-width="1"/><path d="M13 25l7-6.500 7 6.500h-2v5.500h-3.500v-4h-3v4H15V25z" fill="#e9e7d8" fill-opacity=".5" stroke="#96937c" stroke-width="1"/></svg>
<div class="dl" style="left:35.8px;top:71.7px">rave's Home</div>
<svg class="t" style="left:27.2px;top:92.4px" width="17.0" height="17.0" viewBox="0 0 34 34"><defs><linearGradient id="dv" x1="0" y1="0" x2="1" y2="1"><stop offset="0" stop-color="#fdfdfd"/><stop offset=".45" stop-color="#cfd2d6"/><stop offset=".6" stop-color="#f1f2f4"/><stop offset="1" stop-color="#aeb1b6"/></linearGradient></defs><circle cx="17" cy="17" r="16" fill="url(#dv)" stroke="#8d9096" stroke-width=".8"/><circle cx="17" cy="17" r="6.500" fill="#dfe0e3" stroke="#a9acb1" stroke-width=".8"/><circle cx="17" cy="17" r="3.200" fill="#0a0f1e" stroke="#777" stroke-width=".8"/></svg>
<div class="dl" style="left:35.8px;top:112.5px">Fedora-MATE-Live-</div>
<div class="dl" style="left:35.8px;top:118.8px">24-20160406-n-0</div>
<svg class="t" style="left:28.0px;top:132.6px" width="15.2" height="18.8" viewBox="0 0 28 37"><defs><linearGradient id="tr" x1="0" y1="0" x2="1" y2="0"><stop offset="0" stop-color="#b4b6b2"/><stop offset=".35" stop-color="#eeefec"/><stop offset="1" stop-color="#9a9c97"/></linearGradient></defs><path d="M5 9c2-5 5-8 9-7 3-2 7 0 8 3 3 1 3 4 1 5z" fill="#f7f7f5" stroke="#b4b5b1" stroke-width=".7"/><path d="M3 11h22l-2.500 23c0 1-1 2-2 2H7.500c-1 0-2-1-2-2z" fill="url(#tr)" stroke="#777974" stroke-width=".8"/><ellipse cx="14" cy="11" rx="11.500" ry="2.500" fill="#d4d5d1" stroke="#777974" stroke-width=".8"/><path d="M7 15l1.500 18M10.500 15.500l.8 18M14 16v18M17.500 15.500l-.8 18M21 15l-1.500 18" stroke="#858782" stroke-width=".8" stroke-opacity=".7"/></svg>
<div class="dl" style="left:35.8px;top:152.4px">Trash</div>
<svg class="t" style="left:27.0px;top:165.8px" width="21.5" height="12.4" viewBox="0 0 48 30"><rect x=".4" y=".4" width="47.200" height="29.200" fill="#070c1c" stroke="#4a4f5e" stroke-width=".8"/><rect x=".4" y=".4" width="47.200" height="1.500" fill="#b9b9b9"/><rect x=".4" y="28.100" width="47.200" height="1.500" fill="#b9b9b9"/><rect x="3" y="4" width="8" height="6" fill="#3c5c98"/><rect x="26" y="5" width="19" height="12" fill="#3a5a9a"/><rect x="28" y="7" width="8" height="6" fill="#9cb4dc"/><rect x="4" y="14" width="14" height="10" fill="#2c467c"/><rect width="48" height="30" fill="#3f6fb5" fill-opacity=".5"/></svg>
<div class="dl" style="left:16.600px;top:181.900px;transform:none;background:#5f93c9;border-radius:1px;padding:.7px 1.400px;text-shadow:none">MATE-1.14_3.png</div>
<svg class="t" style="left:26.0px;top:203.8px" width="19.0" height="17.5" viewBox="0 0 40 37"><defs><linearGradient id="fg2" x1="0" y1="0" x2="0" y2="1"><stop offset="0" stop-color="#dedccb"/><stop offset="1" stop-color="#bdbba6"/></linearGradient></defs><path d="M2 5c0-1 .8-2 2-2h10l2 3h18c1 0 2 1 2 2v3H2z" fill="#c2c0aa" stroke="#86836c" stroke-width=".8"/><path d="M1.500 11h37l-1.500 22c0 1-1 2-2 2H5c-1 0-2-1-2-2z" fill="url(#fg2)" stroke="#807d68" stroke-width=".8"/><path d="M2.500 12h35" stroke="#ecead9" stroke-width="1"/></svg>
<div class="dl" style="left:40.0px;top:225.7px">Programming</div>
<svg class="t" style="left:26.0px;top:237.5px" width="19.0" height="17.5" viewBox="0 0 40 37"><defs><linearGradient id="fg3" x1="0" y1="0" x2="0" y2="1"><stop offset="0" stop-color="#dedccb"/><stop offset="1" stop-color="#bdbba6"/></linearGradient></defs><path d="M2 5c0-1 .8-2 2-2h10l2 3h18c1 0 2 1 2 2v3H2z" fill="#c2c0aa" stroke="#86836c" stroke-width=".8"/><path d="M1.500 11h37l-1.500 22c0 1-1 2-2 2H5c-1 0-2-1-2-2z" fill="url(#fg3)" stroke="#807d68" stroke-width=".8"/><path d="M2.500 12h35" stroke="#ecead9" stroke-width="1"/></svg>
<div class="dl" style="left:35.8px;top:258.0px">jackass</div>
<svg class="t" style="left:26.4px;top:268.8px" width="19.0" height="17.5" viewBox="0 0 40 37"><defs><linearGradient id="fg4" x1="0" y1="0" x2="0" y2="1"><stop offset="0" stop-color="#dedccb"/><stop offset="1" stop-color="#bdbba6"/></linearGradient></defs><path d="M2 5c0-1 .8-2 2-2h10l2 3h18c1 0 2 1 2 2v3H2z" fill="#c2c0aa" stroke="#86836c" stroke-width=".8"/><path d="M1.500 11h37l-1.500 22c0 1-1 2-2 2H5c-1 0-2-1-2-2z" fill="url(#fg4)" stroke="#807d68" stroke-width=".8"/><path d="M2.500 12h35" stroke="#ecead9" stroke-width="1"/></svg>
<div class="dl" style="left:35.8px;top:290.1px">mock</div>
<svg class="t" style="left:27.0px;top:303.6px" width="25.0" height="13.2" viewBox="0 0 48 30"><rect x=".4" y=".4" width="47.200" height="29.200" fill="#070c1c" stroke="#4a4f5e" stroke-width=".8"/><rect x=".4" y=".4" width="47.200" height="1.500" fill="#b9b9b9"/><rect x=".4" y="28.100" width="47.200" height="1.500" fill="#b9b9b9"/><rect x="2" y="3" width="9" height="6" fill="#f0f0f0"/><rect x="30" y="5" width="14" height="13" fill="#ececec"/><rect x="5" y="14" width="18" height="1.200" fill="#d9c46a"/></svg>
<div class="dl" style="left:40.2px;top:320.4px">MATE-1.4_1.png</div>
<svg class="t" style="left:27.8px;top:336.0px" width="24.0" height="14.4" viewBox="0 0 48 30"><rect x=".4" y=".4" width="47.200" height="29.200" fill="#070c1c" stroke="#4a4f5e" stroke-width=".8"/><rect x=".4" y=".4" width="47.200" height="1.500" fill="#b9b9b9"/><rect x=".4" y="28.100" width="47.200" height="1.500" fill="#b9b9b9"/><rect x="2" y="3" width="8" height="5" fill="#f4f4f4"/><rect x="12" y="3" width="8" height="4" fill="#e4e4e4"/><rect x="3" y="12" width="24" height="14" fill="#f0f0f0"/><rect x="32" y="4" width="12" height="12" fill="#e9e9e9"/><rect x="33" y="18" width="10" height="8" fill="#dcdcdc"/></svg>
<div class="dl" style="left:40.0px;top:353.2px;outline:.5px dotted #cfd6e6;padding:.6px 1px">MATE-1.14_2.png</div>
<svg class="t" style="left:27.8px;top:368.4px" width="23.5" height="15.0" viewBox="0 0 48 30"><rect x=".4" y=".4" width="47.200" height="29.200" fill="#070c1c" stroke="#4a4f5e" stroke-width=".8"/><rect x=".4" y=".4" width="47.200" height="1.500" fill="#b9b9b9"/><rect x=".4" y="28.100" width="47.200" height="1.500" fill="#b9b9b9"/><rect x="3" y="3" width="9" height="8" fill="#ececec"/><rect x="3" y="12" width="16" height="14" fill="#f2f2f2"/><rect x="21" y="8" width="20" height="12" fill="#e4e4e4"/><rect x="23" y="10" width="16" height="8" fill="#f6f6f6"/></svg>
<div class="dl" style="left:39.9px;top:385.6px">MATE-1.14_4.png</div>
<svg class="t" style="left:91.0px;top:20.0px" width="24.7" height="13.8" viewBox="0 0 48 30"><rect x=".4" y=".4" width="47.200" height="29.200" fill="#070c1c" stroke="#4a4f5e" stroke-width=".8"/><rect x=".4" y=".4" width="47.200" height="1.500" fill="#b9b9b9"/><rect x=".4" y="28.100" width="47.200" height="1.500" fill="#b9b9b9"/><rect x="4.500" y="3.500" width="13" height="8" fill="#dfe6f2"/><rect x="4.500" y="11.500" width="13" height="9" fill="#8a1c24"/><rect x="4.500" y="3.500" width="4" height="17" fill="#6f8fc8" fill-opacity=".7"/><rect x="32" y="4.500" width="13" height="8.500" fill="#ececec"/><rect x="34" y="7" width="7" height="3" fill="#e0b090"/><rect x="19" y="15" width="12" height="2" fill="#f2f2f2"/><rect x="22" y="21" width="3.500" height="4" fill="#f2f2f2"/><rect x="31" y="20" width="3.500" height="5" fill="#f2f2f2"/></svg>
<div class="dl" style="left:103.5px;top:37.1px">MATE-1.14_5.png</div>
<svg class="t" style="left:91.0px;top:52.7px" width="22.0" height="13.4" viewBox="0 0 48 30"><rect x=".4" y=".4" width="47.200" height="29.200" fill="#070c1c" stroke="#4a4f5e" stroke-width=".8"/><rect x=".4" y=".4" width="47.200" height="1.500" fill="#b9b9b9"/><rect x=".4" y="28.100" width="47.200" height="1.500" fill="#b9b9b9"/><rect x="8" y="3.500" width="17" height="9" fill="#dcdcdc"/><rect x="4" y="14" width="22" height="13" fill="#f0f0f0"/><rect x="21" y="23" width="4" height="4" fill="#c03a3a"/><rect x="31" y="4" width="13" height="10" fill="#e6e6e6"/><rect x="33" y="6" width="9" height="4" fill="#b9c6dc"/><rect x="32" y="18" width="11" height="8" fill="#ececec"/></svg>
<div class="dl" style="left:103.5px;top:69.1px">MATE-1.14_6.png</div>
<svg class="t" style="left:91.0px;top:84.6px" width="25.6" height="13.8" viewBox="0 0 48 30"><rect x=".4" y=".4" width="47.200" height="29.200" fill="#070c1c" stroke="#4a4f5e" stroke-width=".8"/><rect x=".4" y=".4" width="47.200" height="1.500" fill="#b9b9b9"/><rect x=".4" y="28.100" width="47.200" height="1.500" fill="#b9b9b9"/><rect x="3" y="4.500" width="27" height="23" fill="#ececec"/><rect x="5" y="7" width="23" height="19" fill="#fafafa"/><rect x="34" y="9" width="8" height="8" fill="#e4e4e4"/><rect x="35" y="20" width="9" height="7" fill="#dedede"/><rect x="37" y="1.500" width="10" height="2" fill="#f4f4f4"/></svg>
<div class="dl" style="left:103.5px;top:101.5px">MATE-1.14_7.png</div>
<svg class="t" style="left:90.3px;top:117.1px" width="25.9" height="14.6" viewBox="0 0 48 30"><rect x=".4" y=".4" width="47.200" height="29.200" fill="#070c1c" stroke="#4a4f5e" stroke-width=".8"/><rect x=".4" y=".4" width="47.200" height="1.500" fill="#b9b9b9"/><rect x=".4" y="28.100" width="47.200" height="1.500" fill="#b9b9b9"/><rect x="2" y="11" width="12" height="16" fill="#ececec"/><rect x="4" y="13" width="8" height="11" fill="#fafafa"/><rect x="16" y="2.500" width="12" height="8" fill="#e6c4c8"/><rect x="33" y="3" width="12" height="12" fill="#f0f0f0"/><rect x="32" y="17" width="13" height="10" fill="#c9c9c9"/><rect x="15" y="12" width="16" height="14" fill="#0f1c44"/></svg>
<div class="dl" style="left:103.5px;top:133.9px">MATE-1.14_8.png</div>
<!-- Appearance Preferences window -->
<div class="win" style="left:47.3px;top:139px;width:320.6px;height:238.5px"><div class="tb"></div></div>
<div class="t" style="left:51.6px;top:144.6px;width:1.6px;height:1.6px;border-radius:50%;background:#fafafa"></div>
<div class="t" style="left:162.1px;top:141px;width:72.8px;text-align:center;font-weight:bold;font-size:6px;letter-spacing:.11px;color:#9e9e9e" id="apt">Appearance Preferences</div>
<div class="wb" style="left:339.1px;top:141.2px"></div>
<svg class="t" style="left:340.3px;top:142.4px" width="4" height="4" viewBox="0 0 8 8"><path d="M2.400 3.200l1.600 1.800 1.600-1.800" fill="none" stroke="#9a9a9a" stroke-width="1.100"/></svg>
<div class="wb" style="left:348.8px;top:141.2px"></div>
<svg class="t" style="left:350.0px;top:142.4px" width="4" height="4" viewBox="0 0 8 8"><path d="M2.400 4.800l1.600-1.800 1.600 1.800" fill="none" stroke="#9a9a9a" stroke-width="1.100"/></svg>
<div class="wb" style="left:358.5px;top:141.2px"></div>
<svg class="t" style="left:359.7px;top:142.4px" width="4" height="4" viewBox="0 0 8 8"><path d="M2.300 2.300l3.400 3.400M5.700 2.300l-3.400 3.400" fill="none" stroke="#8c8c8c" stroke-width="1.200"/></svg>
<div class="tab" style="left:53.5px;top:156px;width:22.2px;height:8.8px"></div>
<div class="tab" style="left:112px;top:156px;width:19.5px;height:8.8px"></div>
<div class="tab" style="left:131.5px;top:156px;width:28px;height:8.8px"></div>
<div class="t" style="left:52.9px;top:164.2px;width:310.2px;height:193.2px;background:#ececec;border:.6px solid #c2c2c2"></div>
<div class="tab on" style="left:76px;top:154.8px;width:35.4px;height:10.5px;border-color:#c2c2c2"></div>
<span class="t" style="left:55.2px;top:157.2px;color:#333">Theme</span>
<span class="t" style="left:78.2px;top:156.600px">Background</span>
<span class="t" style="left:115px;top:157.2px;color:#333">Fonts</span>
<span class="t" style="left:134px;top:157.2px;color:#333">Interface</span>
<div class="white" style="left:57.9px;top:168.9px;width:299.5px;height:146.6px"></div>
<div class="t" style="left:351.6px;top:169.5px;width:5.2px;height:145.3px;background:#e3e3e3;border-left:.5px solid #c9c9c9"></div>
<div class="t" style="left:352.6px;top:176px;width:3.4px;height:75px;border-radius:1.7px;background:#d2d2d2;border:.5px solid #a4a4a4"></div>
<svg class="t" style="left:352.8px;top:171.6px" width="3" height="2.400" viewBox="0 0 6 5"><path d="M0 4.500L3 .5l3 4z" fill="#555"/></svg>
<svg class="t" style="left:352.8px;top:311.400px" width="3" height="2.400" viewBox="0 0 6 5"><path d="M0 .5l3 4 3-4z" fill="#333"/></svg>
<div class="t" style="left:175.4px;top:210.3px;width:55px;height:33.4px;background:#5f93c9;border-radius:1px;box-shadow:inset 0 0 0 .6px #4a7db5"></div>
<svg width="0" height="0" style="position:absolute"><defs><filter id="b1" x="-30%" y="-30%" width="160%" height="160%"><feGaussianBlur stdDeviation="1.2"/></filter><filter id="b2" x="-30%" y="-30%" width="160%" height="160%"><feGaussianBlur stdDeviation="2.5"/></filter><filter id="b4" x="-40%" y="-40%" width="180%" height="180%"><feGaussianBlur stdDeviation="5"/></filter></defs></svg>
<div class="th" style="left:67.0px;top:178.3px;width:43.8px;height:24.2px;background:linear-gradient(#2c5b80,#3a6a78 45%,#55784e)"></div>
<div class="th" style="left:124.0px;top:178.3px;width:43.8px;height:24.2px;background:#86a6c4;overflow:hidden"><svg width="43.8" height="24.2" viewBox="0 0 88 48" preserveAspectRatio="none" style="display:block"><defs><linearGradient id="wd" x1="0" y1="0" x2="1" y2="0"><stop offset="0" stop-color="#6f8fae"/><stop offset=".5" stop-color="#86a6c6"/><stop offset="1" stop-color="#7c9cbe"/></linearGradient></defs><rect width="88" height="48" fill="url(#wd)"/><g filter="url(#b4)"><path d="M-6 -6h40C24 6 10 14 -6 20z" fill="#000"/><path d="M-6 54V40c16 4 34 4 50 0l-6 14z" fill="#04080e"/><ellipse cx="24" cy="29" rx="30" ry="8" fill="#fff" transform="rotate(-8 24 29)"/><ellipse cx="70" cy="8" rx="22" ry="8" fill="#9dbcda"/></g><g filter="url(#b1)"><ellipse cx="60" cy="31" rx="11" ry="10.500" fill="#4f6c88"/><ellipse cx="60" cy="35" rx="8" ry="5" fill="#16283a"/><ellipse cx="59" cy="25" rx="7" ry="3.500" fill="#d4e4f0"/><ellipse cx="62" cy="38" rx="5" ry="1.800" fill="#a9c4dc"/></g></svg></div>
<div class="th" style="left:181.2px;top:178.3px;width:43.8px;height:24.2px;background:linear-gradient(#2a5a86,#42708a 40%,#5f8a6c 75%,#6b9058);overflow:hidden"><svg width="43.8" height="24.2" viewBox="0 0 88 48" preserveAspectRatio="none" style="display:block"><g filter="url(#b4)"><ellipse cx="48" cy="12" rx="34" ry="10" fill="#a9c4c4" fill-opacity=".6"/><ellipse cx="50" cy="30" rx="30" ry="8" fill="#8fae9c" fill-opacity=".35"/></g><g fill="none" stroke="#b9d0b0" stroke-opacity=".35" stroke-width="1.200" filter="url(#b1)"><path d="M30 44C50 40 70 36 88 26M44 48C60 44 76 40 88 34"/></g></svg></div>
<div class="th" style="left:238.2px;top:178.3px;width:43.8px;height:24.2px;background:#6fc81f;overflow:hidden"><svg width="43.8" height="24.2" viewBox="0 0 88 48" preserveAspectRatio="none" style="display:block"><defs><linearGradient id="lf" x1="0" y1="1" x2="1" y2="0"><stop offset="0" stop-color="#3f9a0a"/><stop offset=".5" stop-color="#76cf1e"/><stop offset="1" stop-color="#9be23a"/></linearGradient></defs><rect width="88" height="48" fill="url(#lf)"/><g fill="none" stroke="#3d930c" stroke-width="1.700" stroke-opacity=".75" filter="url(#b1)"><path d="M-2 34C4 22 12 12 22 2"/><path d="M-2 50C8 30 22 12 38-2"/><path d="M10 50C18 32 32 14 50-2"/><path d="M22 50C30 34 42 16 62-2"/><path d="M34 50C40 36 52 18 74-2"/><path d="M46 50C52 38 62 22 86-2"/><path d="M58 50C62 40 72 26 92 8"/><path d="M70 50C74 42 82 32 92 22"/><path d="M-2 18C2 12 6 6 12-2"/></g><g fill="none" stroke="#b4ee5a" stroke-width="1.400" stroke-opacity=".6" filter="url(#b1)"><path d="M4 50C13 31 27 13 44-2"/><path d="M16 50C24 33 37 15 56-2"/><path d="M28 50C35 35 47 17 68-2"/><path d="M40 50C46 37 57 20 80-2"/><path d="M52 50C57 39 67 24 90 2"/></g></svg></div>
<svg class="t" style="left:294.2px;top:177.2px" width="46.400" height="26.800" viewBox="0 0 46.400 26.800"><path d="M43.700 0l2.500 3v23.700H2.600L0 23.300h43.700z" fill="#8a8a8a"/><path d="M43.700 0l2.500 3v23.700l-2.500-3.400z" fill="#6e6e6e"/><path d="M0 23.300h43.700l2.500 3.400H2.600z" fill="#9c9c9c"/></svg>
<div class="th" style="left:294.2px;top:177.2px;width:43.700px;height:23.300px;background:#0c0e10;box-shadow:none;overflow:hidden"><svg width="43.7" height="23.3" viewBox="0 0 88 48" preserveAspectRatio="none" style="display:block"><defs><radialGradient id="gx"><stop offset="0" stop-color="#dedbd2"/><stop offset=".2" stop-color="#a9aaa8" stop-opacity=".85"/><stop offset=".6" stop-color="#72767a" stop-opacity=".55"/><stop offset="1" stop-color="#44474c" stop-opacity="0"/></radialGradient></defs><rect width="88" height="48" fill="#0d0f11"/><g transform="rotate(-24 34 22)"><ellipse cx="34" cy="22" rx="34" ry="14" fill="url(#gx)"/><g fill="none" stroke="#9a9da2" stroke-opacity=".45" stroke-width="2.200" filter="url(#b1)"><path d="M8 22c4-9 18-12 30-10M60 22c-4 9-18 12-30 10M14 30c10 6 30 6 40-2M54 14C44 8 24 8 14 16"/></g><ellipse cx="34" cy="22" rx="4.500" ry="2.600" fill="#f4f1e8" fill-opacity=".85" filter="url(#b1)"/></g><circle cx="80" cy="6" r=".8" fill="#d9b45a"/></svg></div>
<div class="th" style="left:67.0px;top:214.6px;width:43.8px;height:24.2px;background:linear-gradient(#7fa9dc 0,#8fb4de 26%,#3f78a8 33%,#356a92 40%,#7f8c48 48%,#c79e2c 66%,#b58a22 100%);overflow:hidden"><svg width="43.8" height="24.2" viewBox="0 0 88 48" preserveAspectRatio="none" style="display:block"><g filter="url(#b2)"><ellipse cx="70" cy="30" rx="20" ry="8" fill="#6f8a2e" fill-opacity=".7"/><ellipse cx="20" cy="40" rx="24" ry="8" fill="#d9a826" fill-opacity=".8"/><ellipse cx="60" cy="44" rx="30" ry="6" fill="#a88a24" fill-opacity=".7"/></g><g stroke="#b9923a" stroke-width="1.100" stroke-opacity=".65" fill="none" filter="url(#b1)"><path d="M8 48C16 30 26 14 40 4M22 48C30 28 40 14 56 6M36 48C42 32 52 20 64 10M0 44C6 32 12 22 22 12M50 48C54 36 62 26 72 18"/></g></svg></div>
<div class="th" style="left:124.0px;top:214.6px;width:43.8px;height:24.2px;background:#2743a0;overflow:hidden"><svg width="43.8" height="24.2" viewBox="0 0 88 48" preserveAspectRatio="none" style="display:block"><rect width="88" height="48" fill="#2844a2"/><g stroke="#6f8ee0" stroke-opacity=".2" stroke-width="1.200" fill="none" filter="url(#b1)"><path d="M30 40L66 8M10 44L36 14M50 44L80 16M4 18L40 34M34 10L84 38M14 6L52 40"/></g><path d="M56 8L72 30" stroke="#a9bcf0" stroke-opacity=".4" stroke-width="1.400" filter="url(#b1)"/><filter id="nz" x="0" y="0" width="100%" height="100%"><feTurbulence type="fractalNoise" baseFrequency=".9" numOctaves="2" seed="3"/><feColorMatrix values="0 0 0 0 .55  0 0 0 0 .65  0 0 0 0 1  0 0 0 .9 -.32"/></filter><rect width="88" height="48" filter="url(#nz)" opacity=".55"/><rect width="88" height="48" fill="none" stroke="#16256a" stroke-width="4" stroke-opacity=".6" filter="url(#b1)"/></svg></div>
<div class="th" style="left:181.2px;top:214.6px;width:43.8px;height:24.2px;background:radial-gradient(ellipse 60% 70% at 55% 45%,#0a1a44,#050a20 80%);box-shadow:none"><svg width="43.8" height="24.2" viewBox="0 0 88 48" preserveAspectRatio="none" style="display:block"><g fill="#c9d6f4"><circle cx="30" cy="14" r=".7"/><circle cx="44" cy="22" r=".9"/><circle cx="52" cy="30" r=".7"/><circle cx="38" cy="34" r=".6"/><circle cx="62" cy="16" r=".6"/><circle cx="70" cy="36" r=".6"/><circle cx="18" cy="30" r=".5"/></g><path d="M28 12C36 8 46 8 52 10M40 26c6 2 10 8 8 14" stroke="#5f7fc0" stroke-opacity=".35" stroke-width=".8" fill="none"/></svg></div>
<div class="th" style="left:238.2px;top:214.6px;width:43.8px;height:24.2px;background:linear-gradient(28deg,#0e2448 8%,#1f4f8c 45%,#4f8cc8 78%,#8fbbe8);overflow:hidden"><svg width="43.8" height="24.2" viewBox="0 0 88 48" preserveAspectRatio="none" style="display:block"><g fill="none" stroke="#12305e" stroke-opacity=".45" stroke-width="3.500" filter="url(#b2)"><path d="M-4 14C30 18 60 30 92 46M-4 0C30 4 64 16 92 30M-4 30C20 32 40 40 60 50"/></g><g fill="#15315c" fill-opacity=".8" filter="url(#b1)"><circle cx="71" cy="4" r="3.400"/><circle cx="78" cy="13" r="2.600"/><circle cx="71" cy="23" r="2"/><circle cx="78" cy="31" r="1.800"/><circle cx="74" cy="40" r="1.400"/></g></svg></div>
<div class="th" style="left:295.4px;top:214.6px;width:43.8px;height:24.2px;background:linear-gradient(100deg,#2d5d80,#487278 45%,#6e8c58);overflow:hidden"><svg width="43.8" height="24.2" viewBox="0 0 88 48" preserveAspectRatio="none" style="display:block"><g fill="#e6eed2" fill-opacity=".85"><circle cx="76" cy="5" r="1.100"/><circle cx="82" cy="9" r="1.500"/><circle cx="78" cy="15" r="1"/><circle cx="84" cy="20" r="1.300"/><circle cx="80" cy="25" r="1.700"/><circle cx="85" cy="31" r="1.300"/><circle cx="79" cy="36" r="1.200"/><circle cx="83" cy="42" r="1.500"/><circle cx="74" cy="41" r=".9"/><circle cx="72" cy="11" r=".8"/><circle cx="86" cy="3" r="1"/><circle cx="76" cy="30" r=".8"/></g></svg></div>
<div class="th" style="left:67.0px;top:250.0px;width:43.8px;height:24.2px;background:#cf3a0a;overflow:hidden"><svg width="43.8" height="24.2" viewBox="0 0 88 48" preserveAspectRatio="none" style="display:block"><rect width="88" height="48" fill="#d23c0a"/><g filter="url(#b2)"><path d="M-4 -4h26L44 26-4 34z" fill="#a81f08"/><path d="M40 -4h52v32L52 26z" fill="#e9581a"/><path d="M-4 52l30-24 34 24z" fill="#b82a08"/><path d="M64 52l28-22v22z" fill="#9c2006"/><ellipse cx="46" cy="30" rx="12" ry="11" fill="#f7a020"/><ellipse cx="34" cy="20" rx="6" ry="5" fill="#f9b63e"/><ellipse cx="52" cy="44" rx="6" ry="6" fill="#f08a18"/></g><g stroke="#f2852e" stroke-opacity=".55" stroke-width="1.200" filter="url(#b1)"><path d="M8 0l20 22M20 0l14 18M60 8L50 24M80 14L58 28M86 30L60 34"/></g></svg></div>
<div class="th" style="left:124.0px;top:250.0px;width:43.8px;height:24.2px;background:#d49c1c;overflow:hidden"><svg width="43.8" height="24.2" viewBox="0 0 88 48" preserveAspectRatio="none" style="display:block"><rect width="88" height="48" fill="#dba21c"/><g filter="url(#b4)"><ellipse cx="32" cy="8" rx="30" ry="12" fill="#f7c626"/><ellipse cx="8" cy="34" rx="16" ry="12" fill="#86a038"/><ellipse cx="78" cy="4" rx="14" ry="8" fill="#7d9a36"/><ellipse cx="40" cy="44" rx="14" ry="8" fill="#7a9434"/><ellipse cx="14" cy="42" rx="7" ry="6" fill="#f4d860"/></g><g filter="url(#b1)"><path d="M34 30c6-12 18-20 32-19 12 1 20 9 22 19v18H58c-12-2-22-8-24-18z" fill="#d02c0c"/><path d="M44 16l8-6 4 8 6-10 4 10 8-6-2 12-24 4z" fill="#f0641a"/><path d="M56 14l4 10M64 12l0 12M50 18l6 8" stroke="#f7b030" stroke-width="1.400"/><path d="M60 34c8 0 16 4 22 12H56z" fill="#8c1a08"/></g></svg></div>
<div class="th" style="left:181.2px;top:250.0px;width:43.8px;height:24.2px;background:#4aa81a;overflow:hidden"><svg width="43.8" height="24.2" viewBox="0 0 88 48" preserveAspectRatio="none" style="display:block"><rect width="88" height="48" fill="#4aa81a"/><g stroke="#8fdc48" stroke-width="1.300" stroke-opacity=".6" fill="none" filter="url(#b1)"><path d="M4 48C6 30 8 14 14 0M14 48C16 28 20 12 26 0M24 48C26 30 30 14 36 0M34 48C36 30 40 14 46 0M44 48C46 32 50 16 56 0M54 48C56 30 60 14 66 0M64 48C66 30 70 14 76 0M74 48C76 30 80 14 86 0M84 48C85 36 87 26 90 16"/></g><g stroke="#2a820a" stroke-width="1.300" stroke-opacity=".6" fill="none" filter="url(#b1)"><path d="M9 48C11 30 14 14 20 0M19 48C21 30 25 14 31 0M29 48C31 30 35 14 41 0M39 48C41 30 45 14 51 0M49 48C51 30 55 14 61 0M59 48C61 30 65 14 71 0M69 48C71 30 75 14 81 0M79 48C81 32 84 18 88 8"/></g></svg></div>
<div class="th" style="left:238.2px;top:250.0px;width:43.8px;height:24.2px;background:linear-gradient(90deg,#c2c2c2,#e6e6e6 20%,#f5f5f5 42%,#f4f4f4);box-shadow:0 .4px .8px rgba(0,0,0,.12)"><svg width="43.8" height="24.2" viewBox="0 0 88 48" preserveAspectRatio="none" style="display:block"><circle cx="44" cy="22" r="11" fill="#bfe0c2"/><circle cx="44" cy="22" r="8.500" fill="#a2d3a8"/><path d="M38 17l7 5-7 5zM45 17l7 5-7 5z" fill="#f4faf4"/><rect x="30" y="40" width="28" height="1.500" fill="#d9e8da"/></svg></div>
<div class="th" style="left:295.4px;top:250.0px;width:43.8px;height:24.2px;background:linear-gradient(90deg,#607a50,#4f746a 45%,#3b698e 80%,#3f6c98);overflow:hidden"><svg width="43.8" height="24.2" viewBox="0 0 88 48" preserveAspectRatio="none" style="display:block"><path d="M66 -2c5 16 3 34-3 52h28V-2z" fill="#7f9fc2" fill-opacity=".85"/><g stroke="#cfdcec" stroke-opacity=".5" fill="none" stroke-width=".9"><path d="M70 0c4 16 2 32-2 48M74 0c4 16 2 32-2 48M78 0c4 16 2 32-2 48M82 0c4 16 2 32-2 48M86 0c3 16 1 32-2 48"/></g></svg></div>
<div class="th" style="left:67.0px;top:285.5px;width:43.8px;height:24.2px;background:#3f7d24;overflow:hidden"><svg width="43.8" height="24.2" viewBox="0 0 88 48" preserveAspectRatio="none" style="display:block"><rect width="88" height="48" fill="#4a8a2a"/><g filter="url(#b2)"><ellipse cx="68" cy="14" rx="22" ry="14" fill="#1f4816"/><ellipse cx="30" cy="30" rx="16" ry="12" fill="#5fa030"/><ellipse cx="12" cy="10" rx="9" ry="8" fill="#a9c2ec"/><ellipse cx="58" cy="36" rx="8" ry="7" fill="#b4ccf0"/><ellipse cx="56" cy="4" rx="7" ry="4" fill="#8c9cc8"/><ellipse cx="76" cy="44" rx="8" ry="5" fill="#9cb4e0"/><ellipse cx="80" cy="10" rx="6" ry="5" fill="#3a3a30"/></g><g filter="url(#b1)"><path d="M20 50C30 38 40 32 46 22l5 2C46 34 38 42 32 50z" fill="#b4e070"/><path d="M24 12C44 20 60 26 84 30" stroke="#8fcf50" stroke-width="2" fill="none"/><circle cx="59" cy="25" r="2.200" fill="#d42a12"/></g></svg></div>
<div class="th" style="left:124.0px;top:285.5px;width:43.8px;height:24.2px;background:radial-gradient(ellipse 70% 75% at 50% 60%,#2c4612,#080c04 88%)"><svg width="43.8" height="24.2" viewBox="0 0 88 48" preserveAspectRatio="none" style="display:block"><circle cx="15.500" cy="25" r="6.800" fill="#8fc34a"/><path d="M12.500 21l6.500 4-6.500 4z" fill="#1c2a0c"/><text x="22.500" y="33" font-family="Liberation Sans,sans-serif" font-style="italic" font-size="22" fill="#9acb50" textLength="56" lengthAdjust="spacingAndGlyphs">MATE</text></svg></div>
<div class="th" style="left:181.2px;top:285.5px;width:43.8px;height:24.2px;background:linear-gradient(#526c38,#6c8c42 55%,#7a9c4a)"><svg width="43.8" height="24.2" viewBox="0 0 88 48" preserveAspectRatio="none" style="display:block"><circle cx="15.500" cy="25" r="6.800" fill="#a9c486"/><path d="M12.500 21l6.500 4-6.500 4z" fill="#6a8844"/><text x="22.500" y="33" font-family="Liberation Sans,sans-serif" font-style="italic" font-size="22" fill="#b6cc98" textLength="56" lengthAdjust="spacingAndGlyphs">MATE</text></svg></div>
<div class="th" style="left:238.2px;top:285.5px;width:43.8px;height:24.2px;background:#1c5c18;overflow:hidden"><svg width="43.8" height="24.2" viewBox="0 0 88 48" preserveAspectRatio="none" style="display:block"><rect width="88" height="48" fill="#1a5616"/><g filter="url(#b1)"><path d="M-2 32C16 12 46 6 70 14L58 40 8 50z" fill="#43aa38"/><path d="M6 8C20 2 40 4 56 12L20 26z" fill="#58b848"/><path d="M10 44C30 30 48 24 68 18" stroke="#8add72" stroke-width="1.300" fill="none"/><path d="M62 -2l30 10v24L72 22z" fill="#2a7a24"/><path d="M74 0C70 14 70 30 76 48" stroke="#3c9a30" stroke-width="2.500" fill="none"/><path d="M-2 -2h20L-2 18z" fill="#0a2a08"/><path d="M52 50l40-16v16z" fill="#0c2c0a"/><path d="M56 48c2-6 6-8 10-8l-2 8z" fill="#7fd060"/></g><g fill="#e0f6da" fill-opacity=".85"><circle cx="40" cy="18" r="1.300"/><circle cx="28" cy="26" r="1.100"/><circle cx="47" cy="34" r="1.300"/></g></svg></div>
<div class="th" style="left:295.4px;top:285.5px;width:43.8px;height:24.2px;background:linear-gradient(115deg,#34689a,#4a7c9c 32%,#6a8e90 58%,#70905e);overflow:hidden"><svg width="43.8" height="24.2" viewBox="0 0 88 48" preserveAspectRatio="none" style="display:block"><g filter="url(#b2)"><path d="M-4 -4h96v6C56 4 26 6 -4 18z" fill="#2a5c8c" fill-opacity=".7"/><path d="M-4 24C24 12 48 22 92 10v14C56 30 30 24 -4 38z" fill="#a9c4d4" fill-opacity=".35"/><path d="M-4 40C14 30 30 40 44 52H-4z" fill="#c4d6e0" fill-opacity=".35"/><path d="M40 52C52 40 70 34 92 34v18z" fill="#8fa890" fill-opacity=".5"/></g></svg></div>
<span class="t" style="left:58px;top:321px">Style:</span>
<div class="combo" style="left:78px;top:318.400px;width:30px;height:11.400px"></div>
<span class="t" style="left:80.600px;top:321px">Zoom</span>
<svg class="t" style="left:102.200px;top:320.400px" width="3.400" height="7.400" viewBox="0 0 7 15"><path d="M1 6l2.500-3.500L6 6zM1 9l2.500 3.500L6 9z" fill="#444"/></svg>
<span class="t" style="left:117.800px;top:321px">Colors:</span>
<div class="combo" style="left:141px;top:318.400px;width:62px;height:11.400px"></div>
<span class="t" style="left:143.600px;top:321px">Vertical gradient</span>
<svg class="t" style="left:197.200px;top:320.400px" width="3.400" height="7.400" viewBox="0 0 7 15"><path d="M1 6l2.500-3.500L6 6zM1 9l2.500 3.500L6 9z" fill="#444"/></svg>
<div class="btn" style="left:206.400px;top:318.400px;width:19.200px;height:11.400px"><div class="t" style="left:2.200px;top:2.400px;transform:none;width:13.600px;height:5.400px;background:#4f8dcb;border:.4px solid #5580ad"></div></div>
<div class="btn" style="left:229px;top:318.400px;width:19.800px;height:11.400px"><div class="t" style="left:2.200px;top:2.400px;transform:none;width:14.200px;height:5.400px;background:#329a22;border:.4px solid #3f8a30"></div></div>
<span class="t" style="left:59.900px;top:343.300px;color:#2a76c6;text-decoration:underline">Get more backgrounds online</span>
<div class="btn" style="left:282.500px;top:341.300px;width:35.800px;height:9.800px"><svg class="t" style="left:4px" width="4.400" height="4.400" viewBox="0 0 9 9"><rect x=".5" y="3" width="8" height="3" rx=".5" fill="#4a6fa5" stroke="#2f4f80" stroke-width=".6"/></svg><span class="t" style="left:10.400px">Remove</span></div>
<div class="btn" style="left:321.400px;top:341.400px;width:35.200px;height:9.600px"><svg class="t" style="left:7px" width="4.800" height="4.800" viewBox="0 0 9 9"><path d="M3 .5h3v2.500h2.500v3H6v2.500H3V6H.5V3H3z" fill="#4a6fa5" stroke="#2f4f80" stroke-width=".6"/></svg><span class="t" style="left:13.600px">Add...</span></div>
<div class="btn" style="left:52.700px;top:362.200px;width:33.800px;height:9.800px"><svg class="t" style="left:3.800px" width="5" height="5" viewBox="0 0 10 10"><circle cx="5" cy="5" r="4" fill="none" stroke="#c9b23a" stroke-width="1.400" stroke-dasharray="2.200 1.400"/><circle cx="5" cy="5" r="1.500" fill="#f2f2f2"/><circle cx="3" cy="3" r="1" fill="#6fa23a"/></svg><span class="t" style="left:10.600px">Help</span></div>
<div class="btn" style="left:328.400px;top:362.300px;width:33.900px;height:9.600px"><svg class="t" style="left:6.600px" width="4.400" height="4.400" viewBox="0 0 9 9"><path d="M1.500 1.500l6 6M7.500 1.500l-6 6" stroke="#444" stroke-width="1.500"/></svg><span class="t" style="left:12.800px">Close</span></div>
<!-- Main Menu window -->
<div class="win" style="left:479.4px;top:28.2px;width:273.5px;height:225.8px"><div class="tb"></div></div>
<div class="t" style="left:484.6px;top:34px;width:1.600px;height:1.600px;border-radius:50%;background:#fafafa"></div>
<div class="t" style="left:591px;top:30.3px;width:32px;text-align:center;font-weight:bold;font-size:6px;color:#333" id="mmt">Main Menu</div>
<div class="wb" style="left:724.5px;top:30.500px"></div>
<svg class="t" style="left:725.7px;top:31.700px" width="4" height="4" viewBox="0 0 8 8"><path d="M2.400 3.200l1.600 1.800 1.600-1.800" fill="none" stroke="#666" stroke-width="1.100"/></svg>
<div class="wb" style="left:734.2px;top:30.500px"></div>
<svg class="t" style="left:735.4px;top:31.700px" width="4" height="4" viewBox="0 0 8 8"><path d="M2.400 4.800l1.600-1.800 1.600 1.800" fill="none" stroke="#666" stroke-width="1.100"/></svg>
<div class="wb" style="left:743.9px;top:30.500px"></div>
<svg class="t" style="left:745.1px;top:31.700px" width="4" height="4" viewBox="0 0 8 8"><path d="M2.300 2.300l3.400 3.400M5.700 2.300l-3.400 3.400" fill="none" stroke="#666" stroke-width="1.100"/></svg>
<span class="t" style="left:484.500px;top:44.400px">Menus:</span>
<span class="t" style="left:566.300px;top:44.400px">Items:</span>
<div class="white" style="left:484.100px;top:52.400px;width:80.800px;height:174.300px"></div>
<div class="t" style="left:484.700px;top:53px;width:79.600px;height:10.600px;background:#6699cc"></div>
<svg class="t" style="left:485.200px;top:57.1px" width="3.200" height="2.600" viewBox="0 0 6 5"><path d="M0 .5h6L3 4.500z" fill="#fff"/></svg>
<svg class="t" style="left:489.4px;top:53.6px" width="9.6" height="9.6" viewBox="0 0 16 16"><rect x="2" y="9" width="12" height="6" rx="1" fill="#d9b13a" stroke="#8a6a14" stroke-width=".8"/><rect x="2" y="11" width="12" height="1.600" fill="#f0d060"/><path d="M4.500 1.500v7.500" stroke="#6a9a3a" stroke-width="2"/><path d="M8 2.500v6.500" stroke="#c9a040" stroke-width="1.800"/><path d="M11.500 1v8" stroke="#e6c230" stroke-width="2"/><path d="M10.500 1h2" stroke="#b04a3a" stroke-width="1.400"/></svg>
<span class="t" style="left:501.4px;top:55.2px;color:#fff">Applications</span>
<svg class="t" style="left:493.2px;top:64.1px" width="9.6" height="9.6" viewBox="0 0 16 16"><path d="M1 15.500L8 5l7 10.500z" fill="#7fbf3f" stroke="#3f7f1f" stroke-width=".8"/><path d="M5 13.500l3-4.500 3 4.500z" fill="#e4f4d0"/><circle cx="4.500" cy="3" r="2.500" fill="#2c4f8f"/><circle cx="11.500" cy="3" r="2.500" fill="#2c4f8f"/><path d="M4.500 4l6 8M11.500 4l-6 8" stroke="#2a2a2a" stroke-width="1.300"/></svg>
<span class="t" style="left:505.9px;top:65.8px">Accessories</span>
<svg class="t" style="left:493.2px;top:74.7px" width="9.6" height="9.6" viewBox="0 0 16 16"><rect x="2" y="2" width="11" height="12" rx="1" fill="#d9d9d2" stroke="#7e7e76" stroke-width=".8"/><rect x="4" y="6" width="7" height="6" fill="#6aaa4a"/><rect x="9" y="7" width="5" height="7" fill="#8a8a86" stroke="#555" stroke-width=".6"/><path d="M3 4h9" stroke="#5a8a3a" stroke-width="1.400"/></svg>
<span class="t i" style="left:505.9px;top:76.8px">Education</span>
<svg class="t" style="left:493.2px;top:85.2px" width="9.6" height="9.6" viewBox="0 0 16 16"><path d="M2 14l2-6h8l2 6z" fill="#e9e6de" stroke="#8a867a" stroke-width=".8"/><path d="M8 2l2.500 6h-5z" fill="#f4f2ec" stroke="#9a968a" stroke-width=".7"/><circle cx="8" cy="3" r="1.600" fill="#c43a2a"/><path d="M4 12h8" stroke="#b9463a" stroke-width="1.200"/></svg>
<span class="t i" style="left:505.9px;top:87.3px">Games</span>
<svg class="t" style="left:493.2px;top:95.8px" width="9.6" height="9.6" viewBox="0 0 16 16"><ellipse cx="7" cy="9.500" rx="6" ry="5" fill="#d99a3a" stroke="#8a5a14" stroke-width=".8"/><circle cx="4.500" cy="8.500" r="1.200" fill="#c0392b"/><circle cx="7" cy="6.600" r="1.200" fill="#f1c40f"/><circle cx="9.800" cy="8.200" r="1.200" fill="#2e6fb5"/><path d="M14.500 1L8 11" stroke="#6b4a1e" stroke-width="1.600"/><path d="M8.600 10l-1.600 3 2.800-1.600z" fill="#333"/></svg>
<span class="t" style="left:505.9px;top:97.5px">Graphics</span>
<svg class="t" style="left:493.2px;top:106.3px" width="9.6" height="9.6" viewBox="0 0 16 16"><circle cx="8" cy="8" r="6.800" fill="#c9d3e0" stroke="#6a7a92" stroke-width=".8"/><circle cx="8" cy="8" r="5.200" fill="#3f78c4"/><path d="M5 5c1.500-1 3-.5 3.500 1s-1.500 2-1 3.500-1.500 1.500-2.500 0-1-3.500 0-4.500zM10.500 8.500c1 0 2 .8 1.500 2s-1.800 1.500-2 .5.000-2.500.5-2.500z" fill="#8fc46a"/></svg>
<span class="t" style="left:505.9px;top:108.0px">Internet</span>
<svg class="t" style="left:493.2px;top:116.9px" width="9.6" height="9.6" viewBox="0 0 16 16"><path d="M4.500 8h7l-1 6.500h-5z" fill="#f0efe8" stroke="#8a887c" stroke-width=".8"/><path d="M3 1.500l3.500 7" stroke="#c9b25a" stroke-width="1.600"/><path d="M13 1.500l-3.500 7" stroke="#b8b8b0" stroke-width="1.600"/><path d="M8 2v6" stroke="#d98a3a" stroke-width="1.300"/></svg>
<span class="t" style="left:505.9px;top:118.6px">Office</span>
<svg class="t" style="left:493.2px;top:127.4px" width="9.6" height="9.6" viewBox="0 0 16 16"><rect x="2" y="7" width="12" height="7.500" fill="#d8b24a" stroke="#8a6a1a" stroke-width=".8"/><rect x="3.500" y="3" width="9" height="4" fill="#e9cf7a" stroke="#8a6a1a" stroke-width=".7"/><path d="M2 10h12" stroke="#a8832a" stroke-width="1"/><rect x="6.500" y="9" width="3" height="2.400" fill="#6a8a4a"/></svg>
<span class="t i" style="left:505.9px;top:129.5px">Other</span>
<svg class="t" style="left:493.2px;top:137.9px" width="9.6" height="9.6" viewBox="0 0 16 16"><path d="M2 12c3-2 8-2.500 12-1l-1 2.500c-3.500-1-7-.8-10 .5z" fill="#c9c9c4" stroke="#77776f" stroke-width=".7"/><path d="M7 9.500l6-6" stroke="#8a8a84" stroke-width="1.500"/><path d="M12 2l2.500 2.500" stroke="#b9a070" stroke-width="1.800"/></svg>
<span class="t i" style="left:505.9px;top:140.1px">Programming</span>
<svg class="t" style="left:493.2px;top:148.5px" width="9.6" height="9.6" viewBox="0 0 16 16"><rect x="2" y="2" width="3.600" height="12.500" fill="#3a3a38" stroke="#1f1f1d" stroke-width=".5"/><rect x="6" y="3" width="3.600" height="11.500" fill="#6aa84a" stroke="#3f742a" stroke-width=".5"/><rect x="10" y="6" width="4.200" height="8.500" fill="#8fc46a" stroke="#4a7a2e" stroke-width=".5"/><path d="M3.800 3.500v9" stroke="#ddd" stroke-width=".7" stroke-dasharray="1 1"/></svg>
<span class="t" style="left:505.9px;top:150.2px">Sound &amp; Video</span>
<svg class="t" style="left:493.2px;top:159.0px" width="9.6" height="9.6" viewBox="0 0 16 16"><circle cx="8" cy="8" r="6.800" fill="#d6d4cc" stroke="#8d8b82" stroke-width=".9"/><circle cx="8" cy="8" r="4.200" fill="#f4f3ee" stroke="#a9a79c" stroke-width=".8"/><circle cx="8" cy="8" r="1.600" fill="#c9c7bd"/></svg>
<span class="t" style="left:505.9px;top:160.8px">System Tools</span>
<svg class="t" style="left:493.2px;top:169.6px" width="9.6" height="9.6" viewBox="0 0 16 16"><circle cx="8" cy="8" r="7" fill="#3b73c4" stroke="#23508f" stroke-width=".8"/><circle cx="8" cy="4.200" r="1.500" fill="#fff"/><path d="M3.800 6.500h8.400M8 6.500v3.500M8 10l-2.300 3.500M8 10l2.300 3.500" stroke="#fff" stroke-width="1.400" fill="none" stroke-linecap="round"/></svg>
<span class="t i" style="left:505.9px;top:171.7px">Universal Access</span>
<svg class="t" style="left:485.200px;top:183.8px" width="3.200" height="2.600" viewBox="0 0 6 5"><path d="M0 .5h6L3 4.500z" fill="#333"/></svg>
<svg class="t" style="left:489.4px;top:180.2px" width="9.6" height="9.6" viewBox="0 0 16 16"><path d="M2 9h12v5.500H2z" fill="#d9b44a" stroke="#8a6a1a" stroke-width=".8"/><path d="M3 9l2-4h6l2 4" fill="#c9a44a" stroke="#8a6a1a" stroke-width=".7"/><path d="M6 5l5-3.500" stroke="#777" stroke-width="1.500"/><path d="M2 11h12" stroke="#f0d47a" stroke-width="1"/></svg>
<span class="t" style="left:501.4px;top:181.9px">System</span>
<svg class="t" style="left:489.900px;top:193.9px" width="2.600" height="3.200" viewBox="0 0 5 6"><path d="M.5 0v6L4.500 3z" fill="#333"/></svg>
<svg class="t" style="left:494.0px;top:190.7px" width="9.6" height="9.6" viewBox="0 0 16 16"><rect x="1.500" y="2.500" width="13" height="11" rx="1.500" fill="#dcdcd8" stroke="#7a7a74" stroke-width=".9"/><path d="M5 5v6M8 5v6M11 5v6" stroke="#8a8a84" stroke-width="1"/><rect x="4" y="6" width="2" height="2" fill="#444"/><rect x="7" y="8" width="2" height="2" fill="#444"/><rect x="10" y="5.500" width="2" height="2" fill="#444"/></svg>
<span class="t" style="left:505.7px;top:192.4px">Preferences</span>
<svg class="t" style="left:494.0px;top:201.2px" width="9.6" height="9.6" viewBox="0 0 16 16"><path d="M2.500 13.500L12 3" stroke="#8a8f98" stroke-width="2"/><path d="M13.500 13.500L5 4" stroke="#6f7f9c" stroke-width="1.600"/><circle cx="12.500" cy="2.800" r="2" fill="#aab0ba"/><circle cx="3.800" cy="3.200" r="1.800" fill="#8f9cb5"/></svg>
<span class="t" style="left:505.7px;top:203.0px">Administration</span>
<div class="white" style="left:566.500px;top:52.900px;width:131.600px;height:173.800px"></div>
<div class="t" style="left:567.100px;top:53.500px;width:130.400px;height:7.800px;background:linear-gradient(#f6f6f6,#e4e4e4);border-bottom:.6px solid #bdbdbd"></div>
<div class="t" style="left:584px;top:53.500px;width:.6px;height:7.800px;background:#bdbdbd"></div>
<span class="t" style="left:568.300px;top:54.600px">Show</span>
<span class="t" style="left:586.200px;top:54.600px">Item</span>
<div class="cb on" style="left:573.300px;top:64.5px"></div>
<svg class="t" style="left:584.9px;top:62.3px" width="9.6" height="9.6" viewBox="0 0 16 16"><path d="M1 15.500L8 5l7 10.500z" fill="#7fbf3f" stroke="#3f7f1f" stroke-width=".8"/><path d="M5 13.500l3-4.500 3 4.500z" fill="#e4f4d0"/><circle cx="4.500" cy="3" r="2.500" fill="#2c4f8f"/><circle cx="11.500" cy="3" r="2.500" fill="#2c4f8f"/><path d="M4.500 4l6 8M11.500 4l-6 8" stroke="#2a2a2a" stroke-width="1.300"/></svg>
<span class="t" style="left:597px;top:64.0px">Accessories</span>
<div class="cb" style="left:573.300px;top:75.0px"></div>
<svg class="t" style="left:584.9px;top:72.8px" width="9.6" height="9.6" viewBox="0 0 16 16"><rect x="2" y="2" width="11" height="12" rx="1" fill="#d9d9d2" stroke="#7e7e76" stroke-width=".8"/><rect x="4" y="6" width="7" height="6" fill="#6aaa4a"/><rect x="9" y="7" width="5" height="7" fill="#8a8a86" stroke="#555" stroke-width=".6"/><path d="M3 4h9" stroke="#5a8a3a" stroke-width="1.400"/></svg>
<span class="t i" style="left:597px;top:74.9px">Education</span>
<div class="cb" style="left:573.300px;top:85.6px"></div>
<svg class="t" style="left:584.9px;top:83.4px" width="9.6" height="9.6" viewBox="0 0 16 16"><path d="M2 14l2-6h8l2 6z" fill="#e9e6de" stroke="#8a867a" stroke-width=".8"/><path d="M8 2l2.500 6h-5z" fill="#f4f2ec" stroke="#9a968a" stroke-width=".7"/><circle cx="8" cy="3" r="1.600" fill="#c43a2a"/><path d="M4 12h8" stroke="#b9463a" stroke-width="1.200"/></svg>
<span class="t i" style="left:597px;top:85.5px">Games</span>
<div class="cb on" style="left:573.300px;top:96.2px"></div>
<svg class="t" style="left:584.9px;top:94.0px" width="9.6" height="9.6" viewBox="0 0 16 16"><ellipse cx="7" cy="9.500" rx="6" ry="5" fill="#d99a3a" stroke="#8a5a14" stroke-width=".8"/><circle cx="4.500" cy="8.500" r="1.200" fill="#c0392b"/><circle cx="7" cy="6.600" r="1.200" fill="#f1c40f"/><circle cx="9.800" cy="8.200" r="1.200" fill="#2e6fb5"/><path d="M14.500 1L8 11" stroke="#6b4a1e" stroke-width="1.600"/><path d="M8.600 10l-1.600 3 2.800-1.600z" fill="#333"/></svg>
<span class="t" style="left:597px;top:95.7px">Graphics</span>
<div class="cb on" style="left:573.300px;top:106.7px"></div>
<svg class="t" style="left:584.9px;top:104.5px" width="9.6" height="9.6" viewBox="0 0 16 16"><circle cx="8" cy="8" r="6.800" fill="#c9d3e0" stroke="#6a7a92" stroke-width=".8"/><circle cx="8" cy="8" r="5.200" fill="#3f78c4"/><path d="M5 5c1.500-1 3-.5 3.500 1s-1.500 2-1 3.500-1.500 1.500-2.500 0-1-3.500 0-4.500zM10.500 8.500c1 0 2 .8 1.500 2s-1.800 1.500-2 .5.000-2.500.5-2.500z" fill="#8fc46a"/></svg>
<span class="t" style="left:597px;top:106.2px">Internet</span>
<div class="cb on" style="left:573.300px;top:117.2px"></div>
<svg class="t" style="left:584.9px;top:115.0px" width="9.6" height="9.6" viewBox="0 0 16 16"><path d="M4.500 8h7l-1 6.500h-5z" fill="#f0efe8" stroke="#8a887c" stroke-width=".8"/><path d="M3 1.500l3.500 7" stroke="#c9b25a" stroke-width="1.600"/><path d="M13 1.500l-3.500 7" stroke="#b8b8b0" stroke-width="1.600"/><path d="M8 2v6" stroke="#d98a3a" stroke-width="1.300"/></svg>
<span class="t" style="left:597px;top:116.8px">Office</span>
<div class="cb" style="left:573.300px;top:127.8px"></div>
<svg class="t" style="left:584.9px;top:125.6px" width="9.6" height="9.6" viewBox="0 0 16 16"><rect x="2" y="7" width="12" height="7.500" fill="#d8b24a" stroke="#8a6a1a" stroke-width=".8"/><rect x="3.500" y="3" width="9" height="4" fill="#e9cf7a" stroke="#8a6a1a" stroke-width=".7"/><path d="M2 10h12" stroke="#a8832a" stroke-width="1"/><rect x="6.500" y="9" width="3" height="2.400" fill="#6a8a4a"/></svg>
<span class="t i" style="left:597px;top:127.7px">Other</span>
<div class="cb" style="left:573.300px;top:138.3px"></div>
<svg class="t" style="left:584.9px;top:136.1px" width="9.6" height="9.6" viewBox="0 0 16 16"><path d="M2 12c3-2 8-2.500 12-1l-1 2.500c-3.500-1-7-.8-10 .5z" fill="#c9c9c4" stroke="#77776f" stroke-width=".7"/><path d="M7 9.500l6-6" stroke="#8a8a84" stroke-width="1.500"/><path d="M12 2l2.500 2.500" stroke="#b9a070" stroke-width="1.800"/></svg>
<span class="t i" style="left:597px;top:138.2px">Programming</span>
<div class="cb on" style="left:573.300px;top:148.9px"></div>
<svg class="t" style="left:584.9px;top:146.7px" width="9.6" height="9.6" viewBox="0 0 16 16"><rect x="2" y="2" width="3.600" height="12.500" fill="#3a3a38" stroke="#1f1f1d" stroke-width=".5"/><rect x="6" y="3" width="3.600" height="11.500" fill="#6aa84a" stroke="#3f742a" stroke-width=".5"/><rect x="10" y="6" width="4.200" height="8.500" fill="#8fc46a" stroke="#4a7a2e" stroke-width=".5"/><path d="M3.800 3.500v9" stroke="#ddd" stroke-width=".7" stroke-dasharray="1 1"/></svg>
<span class="t" style="left:597px;top:148.4px">Sound &amp; Video</span>
<div class="cb on" style="left:573.300px;top:159.5px"></div>
<svg class="t" style="left:584.9px;top:157.2px" width="9.6" height="9.6" viewBox="0 0 16 16"><circle cx="8" cy="8" r="6.800" fill="#d6d4cc" stroke="#8d8b82" stroke-width=".9"/><circle cx="8" cy="8" r="4.200" fill="#f4f3ee" stroke="#a9a79c" stroke-width=".8"/><circle cx="8" cy="8" r="1.600" fill="#c9c7bd"/></svg>
<span class="t" style="left:597px;top:159.0px">System Tools</span>
<div class="cb" style="left:573.300px;top:170.0px"></div>
<svg class="t" style="left:584.9px;top:167.8px" width="9.6" height="9.6" viewBox="0 0 16 16"><circle cx="8" cy="8" r="7" fill="#3b73c4" stroke="#23508f" stroke-width=".8"/><circle cx="8" cy="4.200" r="1.500" fill="#fff"/><path d="M3.800 6.500h8.400M8 6.500v3.500M8 10l-2.300 3.500M8 10l2.300 3.500" stroke="#fff" stroke-width="1.400" fill="none" stroke-linecap="round"/></svg>
<span class="t i" style="left:597px;top:169.9px">Universal Access</span>
<div class="btn" style="left:701.500px;top:53.400px;width:46.300px;height:11.500px"><svg class="t" style="left:6.400px" width="5" height="6" viewBox="0 0 10 12"><path d="M1 .5h6l2.500 2.500v8.500H1z" fill="#f7f4d8" stroke="#9a9468" stroke-width=".8"/><path d="M6.500 .5v3h3" fill="#e6d870" stroke="#9a9468" stroke-width=".6"/></svg><span class="t" style="left:12.600px;color:#222">New Menu</span></div>
<div class="btn" style="left:701.500px;top:69px;width:46.300px;height:11.500px"><svg class="t" style="left:7.600px" width="4.800" height="4.800" viewBox="0 0 9 9"><path d="M3 .5h3v2.500h2.500v3H6v2.500H3V6H.5V3H3z" fill="#4a6fa5" stroke="#2f4f80" stroke-width=".6"/></svg><span class="t" style="left:13.600px;color:#222">New Item</span></div>
<div class="btn dis" style="left:701.500px;top:84.600px;width:46.300px;height:11.500px"><span class="t" style="left:3.600px">New Separator</span></div>
<div class="btn dis" style="left:701.500px;top:104.400px;width:46.300px;height:11.500px"><svg class="t" style="left:9px" width="4.400" height="4.400" viewBox="0 0 9 9"><circle cx="4.500" cy="4.500" r="3.800" fill="#dcdcdc" stroke="#c2c2c2" stroke-width=".6"/></svg><span class="t" style="left:15.200px">Move Up</span></div>
<div class="btn dis" style="left:701.500px;top:119.700px;width:46.300px;height:11.500px"><svg class="t" style="left:5.600px" width="4.400" height="4.400" viewBox="0 0 9 9"><circle cx="4.500" cy="4.500" r="3.800" fill="#dcdcdc" stroke="#c2c2c2" stroke-width=".6"/></svg><span class="t" style="left:11.400px">Move Down</span></div>
<div class="btn" style="left:486.900px;top:234.800px;width:33.600px;height:11.400px"><svg class="t" style="left:5.600px" width="5" height="5" viewBox="0 0 10 10"><circle cx="5" cy="5" r="4" fill="none" stroke="#c9b23a" stroke-width="1.400" stroke-dasharray="2.200 1.400"/><circle cx="5" cy="5" r="1.500" fill="#f2f2f2"/><circle cx="3" cy="3" r="1" fill="#6fa23a"/></svg><span class="t" style="left:12.600px">Help</span></div>
<div class="btn" style="left:675.800px;top:234.800px;width:33.400px;height:11.400px"><svg class="t" style="left:4px" width="5.600" height="6" viewBox="0 0 11 12"><path d="M1 .5h6l2.500 2.500v8.500H1z" fill="#f4f4ee" stroke="#9a9a90" stroke-width=".8"/><path d="M3 7c0-2 3-3 4.500-1.500L8.500 4.500v4H5l1.300-1.300C5.500 6.500 4 7 4 8z" fill="#d9b020" stroke="#8a6a10" stroke-width=".4"/></svg><span class="t" style="left:11px">Revert</span></div>
<div class="btn" style="left:712px;top:234.800px;width:33.400px;height:11.600px;border:.9px solid #5b8cc4;box-shadow:inset 0 0 0 .5px #a9c4e4"><svg class="t" style="left:6px" width="4.400" height="4.400" viewBox="0 0 9 9"><path d="M1.500 1.500l6 6M7.500 1.500l-6 6" stroke="#444" stroke-width="1.500"/></svg><span class="t" style="left:12.400px">Close</span></div>
<svg class="t" style="left:440.4px;top:271px" width="6" height="9" viewBox="0 0 12 18"><path d="M1 1v13l3.200-2.800 2.300 5 2.200-1-2.300-4.900H11z" fill="#fff" stroke="#000" stroke-width="1.200" stroke-linejoin="round"/></svg>
</div>
</body>
</html>
